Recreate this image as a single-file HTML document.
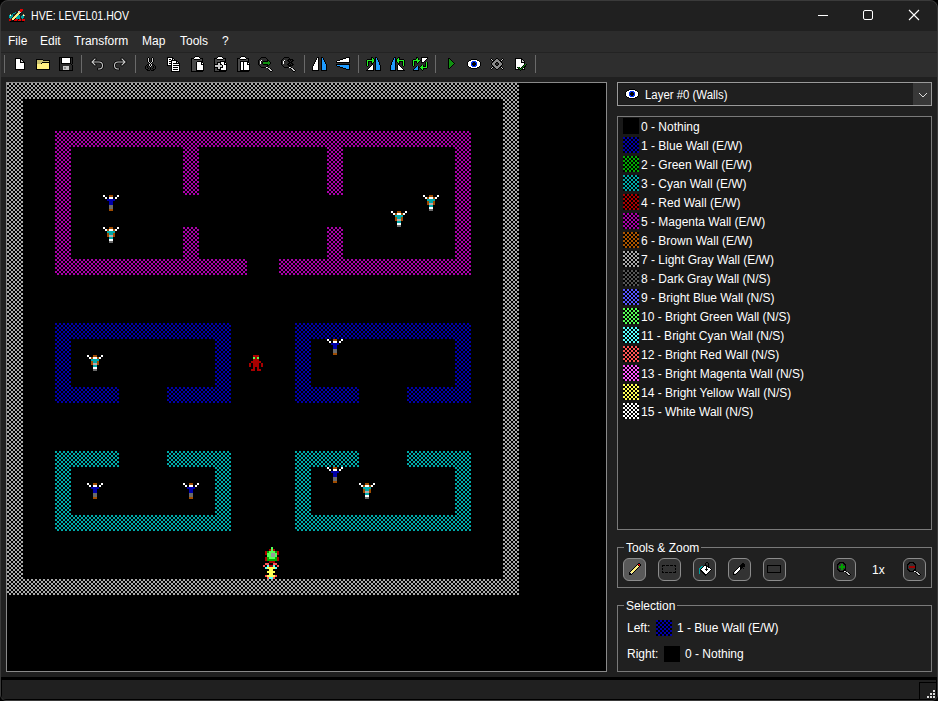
<!DOCTYPE html>
<html><head><meta charset="utf-8">
<style>
html,body{margin:0;padding:0;background:#000;width:938px;height:701px;overflow:hidden}
*{box-sizing:border-box}
#win{position:absolute;left:0;top:0;width:938px;height:701px;background:#202020;border-radius:8px 8px 6px 6px;overflow:hidden;font-family:"Liberation Sans",sans-serif;color:#fff;font-size:12px}
.a{position:absolute}
.t{position:absolute;white-space:nowrap;font-size:12px;color:#fff}
.sw{position:absolute;width:16px;height:16px}
.btn{position:absolute;width:23px;height:23px;border:1px solid #8c8c8c;border-radius:6px;background:#333}
.sep{position:absolute;top:55px;width:1px;height:18px;background:#6a6a6a}
.ic{position:absolute;top:56px}
</style></head><body>
<div id="win">
  <!-- title bar -->
  <div class="a" style="left:0;top:0;width:938px;height:31px;background:#202020"></div>
  <svg class="a" style="left:9px;top:9px" width="16" height="16" shape-rendering="crispEdges"><rect x="11" y="0" width="3" height="1" fill="#e00000"/><rect x="10" y="1" width="4" height="1" fill="#e00000"/><rect x="9" y="2" width="2" height="1" fill="#c8c8c8"/><rect x="11" y="2" width="2" height="1" fill="#e00000"/><rect x="6" y="3" width="1" height="1" fill="#00a0a0"/><rect x="9" y="3" width="1" height="1" fill="#fff080"/><rect x="10" y="3" width="2" height="1" fill="#c8c8c8"/><rect x="4" y="4" width="2" height="1" fill="#00a0a0"/><rect x="8" y="4" width="3" height="1" fill="#fff080"/><rect x="11" y="4" width="1" height="1" fill="#000000"/><rect x="1" y="5" width="1" height="1" fill="#c8c070"/><rect x="3" y="5" width="1" height="1" fill="#00a0a0"/><rect x="7" y="5" width="3" height="1" fill="#fff080"/><rect x="10" y="5" width="1" height="1" fill="#000000"/><rect x="14" y="5" width="1" height="1" fill="#c8c070"/><rect x="0" y="6" width="1" height="1" fill="#00a0a0"/><rect x="1" y="6" width="1" height="1" fill="#ffffff"/><rect x="2" y="6" width="2" height="1" fill="#00a0a0"/><rect x="6" y="6" width="3" height="1" fill="#fff080"/><rect x="9" y="6" width="2" height="1" fill="#00a0a0"/><rect x="13" y="6" width="1" height="1" fill="#00a0a0"/><rect x="14" y="6" width="1" height="1" fill="#ffffff"/><rect x="15" y="6" width="1" height="1" fill="#c8c070"/><rect x="0" y="7" width="4" height="1" fill="#00a0a0"/><rect x="5" y="7" width="3" height="1" fill="#fff080"/><rect x="8" y="7" width="3" height="1" fill="#00a0a0"/><rect x="12" y="7" width="3" height="1" fill="#00a0a0"/><rect x="0" y="8" width="3" height="1" fill="#00a0a0"/><rect x="4" y="8" width="3" height="1" fill="#fff080"/><rect x="7" y="8" width="4" height="1" fill="#00a0a0"/><rect x="12" y="8" width="3" height="1" fill="#00a0a0"/><rect x="1" y="9" width="1" height="1" fill="#00a0a0"/><rect x="3" y="9" width="3" height="1" fill="#fff080"/><rect x="6" y="9" width="1" height="1" fill="#000000"/><rect x="7" y="9" width="4" height="1" fill="#00a0a0"/><rect x="13" y="9" width="1" height="1" fill="#00a0a0"/><rect x="0" y="10" width="2" height="1" fill="#e00000"/><rect x="3" y="10" width="2" height="1" fill="#fff080"/><rect x="5" y="10" width="1" height="1" fill="#000000"/><rect x="6" y="10" width="3" height="1" fill="#e00000"/><rect x="9" y="10" width="1" height="1" fill="#000000"/><rect x="10" y="10" width="2" height="1" fill="#e00000"/><rect x="13" y="10" width="3" height="1" fill="#e00000"/><rect x="0" y="11" width="2" height="1" fill="#e00000"/><rect x="4" y="11" width="1" height="1" fill="#000000"/><rect x="5" y="11" width="3" height="1" fill="#e00000"/><rect x="9" y="11" width="3" height="1" fill="#e00000"/><rect x="13" y="11" width="3" height="1" fill="#e00000"/><rect x="1" y="12" width="14" height="1" fill="#000000"/></svg>
  <div class="t" style="left:31px;top:9px;font-size:12px;color:#fff;transform:scaleX(0.88);transform-origin:0 0">HVE: LEVEL01.HOV</div>
  <!-- window controls -->
  <div class="a" style="left:818px;top:15px;width:10px;height:1px;background:#fff"></div>
  <div class="a" style="left:863px;top:10px;width:10px;height:10px;border:1px solid #fff;border-radius:2px"></div>
  <svg class="a" style="left:908px;top:9px" width="12" height="12"><path d="M1 1 L11 11 M11 1 L1 11" stroke="#fff" stroke-width="1.1"/></svg>

  <!-- menu bar -->
  <div class="a" style="left:0;top:31px;width:938px;height:21px;background:#2c2c2c"></div>
  <div class="t" style="left:8px;top:34px">File</div>
  <div class="t" style="left:40px;top:34px">Edit</div>
  <div class="t" style="left:74px;top:34px">Transform</div>
  <div class="t" style="left:142px;top:34px">Map</div>
  <div class="t" style="left:180px;top:34px">Tools</div>
  <div class="t" style="left:222px;top:34px">?</div>

  <!-- toolbar -->
  <div class="a" style="left:0;top:52px;width:938px;height:1px;background:#232323"></div>
  <div class="a" style="left:0;top:53px;width:938px;height:24px;background:#2e2e2e"></div>
  <div class="sep" style="left:4px"></div><div class="sep" style="left:81px"></div><div class="sep" style="left:135px"></div><div class="sep" style="left:304px"></div><div class="sep" style="left:358px"></div><div class="sep" style="left:435px"></div><div class="sep" style="left:535px"></div><svg class="a" style="left:13px;top:56px" width="16" height="16" shape-rendering="crispEdges"><rect x="2" y="2" width="6" height="1" fill="#000000"/><rect x="2" y="3" width="1" height="1" fill="#000000"/><rect x="3" y="3" width="4" height="1" fill="#ffffff"/><rect x="7" y="3" width="2" height="1" fill="#000000"/><rect x="2" y="4" width="1" height="1" fill="#000000"/><rect x="3" y="4" width="4" height="1" fill="#ffffff"/><rect x="7" y="4" width="1" height="1" fill="#000000"/><rect x="8" y="4" width="1" height="1" fill="#c8c8c8"/><rect x="9" y="4" width="1" height="1" fill="#000000"/><rect x="2" y="5" width="1" height="1" fill="#000000"/><rect x="3" y="5" width="4" height="1" fill="#ffffff"/><rect x="7" y="5" width="1" height="1" fill="#000000"/><rect x="8" y="5" width="2" height="1" fill="#c8c8c8"/><rect x="10" y="5" width="1" height="1" fill="#000000"/><rect x="2" y="6" width="1" height="1" fill="#000000"/><rect x="3" y="6" width="4" height="1" fill="#ffffff"/><rect x="7" y="6" width="5" height="1" fill="#000000"/><rect x="2" y="7" width="1" height="1" fill="#000000"/><rect x="3" y="7" width="8" height="1" fill="#ffffff"/><rect x="11" y="7" width="1" height="1" fill="#000000"/><rect x="2" y="8" width="1" height="1" fill="#000000"/><rect x="3" y="8" width="8" height="1" fill="#ffffff"/><rect x="11" y="8" width="1" height="1" fill="#000000"/><rect x="2" y="9" width="1" height="1" fill="#000000"/><rect x="3" y="9" width="8" height="1" fill="#ffffff"/><rect x="11" y="9" width="1" height="1" fill="#000000"/><rect x="2" y="10" width="1" height="1" fill="#000000"/><rect x="3" y="10" width="8" height="1" fill="#ffffff"/><rect x="11" y="10" width="1" height="1" fill="#000000"/><rect x="2" y="11" width="1" height="1" fill="#000000"/><rect x="3" y="11" width="8" height="1" fill="#ffffff"/><rect x="11" y="11" width="1" height="1" fill="#000000"/><rect x="2" y="12" width="1" height="1" fill="#000000"/><rect x="3" y="12" width="8" height="1" fill="#ffffff"/><rect x="11" y="12" width="1" height="1" fill="#000000"/><rect x="2" y="13" width="10" height="1" fill="#000000"/></svg><svg class="a" style="left:35px;top:56px" width="16" height="16" shape-rendering="crispEdges"><rect x="1" y="3" width="7" height="1" fill="#000000"/><rect x="1" y="4" width="1" height="1" fill="#000000"/><rect x="2" y="4" width="6" height="1" fill="#c8c070"/><rect x="8" y="4" width="7" height="1" fill="#000000"/><rect x="1" y="5" width="1" height="1" fill="#000000"/><rect x="2" y="5" width="12" height="1" fill="#c8c070"/><rect x="14" y="5" width="1" height="1" fill="#000000"/><rect x="1" y="6" width="1" height="1" fill="#000000"/><rect x="2" y="6" width="5" height="1" fill="#c8c070"/><rect x="7" y="6" width="8" height="1" fill="#000000"/><rect x="1" y="7" width="1" height="1" fill="#000000"/><rect x="2" y="7" width="4" height="1" fill="#c8c070"/><rect x="6" y="7" width="1" height="1" fill="#000000"/><rect x="7" y="7" width="7" height="1" fill="#fff080"/><rect x="14" y="7" width="1" height="1" fill="#000000"/><rect x="1" y="8" width="1" height="1" fill="#000000"/><rect x="2" y="8" width="12" height="1" fill="#fff080"/><rect x="14" y="8" width="1" height="1" fill="#000000"/><rect x="1" y="9" width="1" height="1" fill="#000000"/><rect x="2" y="9" width="12" height="1" fill="#fff080"/><rect x="14" y="9" width="1" height="1" fill="#000000"/><rect x="1" y="10" width="1" height="1" fill="#000000"/><rect x="2" y="10" width="12" height="1" fill="#fff080"/><rect x="14" y="10" width="1" height="1" fill="#000000"/><rect x="1" y="11" width="1" height="1" fill="#000000"/><rect x="2" y="11" width="12" height="1" fill="#fff080"/><rect x="14" y="11" width="1" height="1" fill="#000000"/><rect x="1" y="12" width="1" height="1" fill="#000000"/><rect x="2" y="12" width="12" height="1" fill="#fff080"/><rect x="14" y="12" width="1" height="1" fill="#000000"/><rect x="1" y="13" width="14" height="1" fill="#000000"/></svg><svg class="a" style="left:58px;top:56px" width="16" height="16" shape-rendering="crispEdges"><rect x="1" y="1" width="14" height="1" fill="#000000"/><rect x="1" y="2" width="1" height="1" fill="#000000"/><rect x="2" y="2" width="1" height="1" fill="#2a2a2a"/><rect x="3" y="2" width="1" height="1" fill="#000000"/><rect x="4" y="2" width="8" height="1" fill="#ffffff"/><rect x="12" y="2" width="1" height="1" fill="#000000"/><rect x="13" y="2" width="1" height="1" fill="#2a2a2a"/><rect x="14" y="2" width="1" height="1" fill="#000000"/><rect x="1" y="3" width="1" height="1" fill="#000000"/><rect x="2" y="3" width="1" height="1" fill="#2a2a2a"/><rect x="3" y="3" width="1" height="1" fill="#000000"/><rect x="4" y="3" width="8" height="1" fill="#ffffff"/><rect x="12" y="3" width="1" height="1" fill="#000000"/><rect x="13" y="3" width="1" height="1" fill="#2a2a2a"/><rect x="14" y="3" width="1" height="1" fill="#000000"/><rect x="1" y="4" width="1" height="1" fill="#000000"/><rect x="2" y="4" width="1" height="1" fill="#2a2a2a"/><rect x="3" y="4" width="1" height="1" fill="#000000"/><rect x="4" y="4" width="8" height="1" fill="#ffffff"/><rect x="12" y="4" width="1" height="1" fill="#000000"/><rect x="13" y="4" width="1" height="1" fill="#2a2a2a"/><rect x="14" y="4" width="1" height="1" fill="#000000"/><rect x="1" y="5" width="1" height="1" fill="#000000"/><rect x="2" y="5" width="1" height="1" fill="#2a2a2a"/><rect x="3" y="5" width="1" height="1" fill="#000000"/><rect x="4" y="5" width="8" height="1" fill="#ffffff"/><rect x="12" y="5" width="1" height="1" fill="#000000"/><rect x="13" y="5" width="1" height="1" fill="#2a2a2a"/><rect x="14" y="5" width="1" height="1" fill="#000000"/><rect x="1" y="6" width="1" height="1" fill="#000000"/><rect x="2" y="6" width="1" height="1" fill="#2a2a2a"/><rect x="3" y="6" width="1" height="1" fill="#000000"/><rect x="4" y="6" width="8" height="1" fill="#ffffff"/><rect x="12" y="6" width="1" height="1" fill="#000000"/><rect x="13" y="6" width="1" height="1" fill="#2a2a2a"/><rect x="14" y="6" width="1" height="1" fill="#000000"/><rect x="1" y="7" width="1" height="1" fill="#000000"/><rect x="2" y="7" width="1" height="1" fill="#2a2a2a"/><rect x="3" y="7" width="10" height="1" fill="#000000"/><rect x="13" y="7" width="1" height="1" fill="#2a2a2a"/><rect x="14" y="7" width="1" height="1" fill="#000000"/><rect x="1" y="8" width="1" height="1" fill="#000000"/><rect x="2" y="8" width="11" height="1" fill="#2a2a2a"/><rect x="13" y="8" width="1" height="1" fill="#000000"/><rect x="1" y="9" width="1" height="1" fill="#000000"/><rect x="2" y="9" width="12" height="1" fill="#2a2a2a"/><rect x="14" y="9" width="1" height="1" fill="#000000"/><rect x="1" y="10" width="1" height="1" fill="#000000"/><rect x="2" y="10" width="3" height="1" fill="#2a2a2a"/><rect x="5" y="10" width="6" height="1" fill="#c8c8c8"/><rect x="11" y="10" width="3" height="1" fill="#2a2a2a"/><rect x="14" y="10" width="1" height="1" fill="#000000"/><rect x="1" y="11" width="1" height="1" fill="#000000"/><rect x="2" y="11" width="3" height="1" fill="#2a2a2a"/><rect x="5" y="11" width="1" height="1" fill="#c8c8c8"/><rect x="6" y="11" width="2" height="1" fill="#8a8a8a"/><rect x="8" y="11" width="3" height="1" fill="#c8c8c8"/><rect x="11" y="11" width="3" height="1" fill="#2a2a2a"/><rect x="14" y="11" width="1" height="1" fill="#000000"/><rect x="1" y="12" width="1" height="1" fill="#000000"/><rect x="2" y="12" width="3" height="1" fill="#2a2a2a"/><rect x="5" y="12" width="1" height="1" fill="#c8c8c8"/><rect x="6" y="12" width="2" height="1" fill="#8a8a8a"/><rect x="8" y="12" width="3" height="1" fill="#c8c8c8"/><rect x="11" y="12" width="3" height="1" fill="#2a2a2a"/><rect x="14" y="12" width="1" height="1" fill="#000000"/><rect x="1" y="13" width="1" height="1" fill="#000000"/><rect x="2" y="13" width="3" height="1" fill="#2a2a2a"/><rect x="5" y="13" width="6" height="1" fill="#c8c8c8"/><rect x="11" y="13" width="3" height="1" fill="#2a2a2a"/><rect x="14" y="13" width="1" height="1" fill="#000000"/><rect x="1" y="14" width="14" height="1" fill="#000000"/></svg><svg class="a" style="left:89px;top:56px" width="16" height="16" shape-rendering="crispEdges"><g shape-rendering="geometricPrecision" fill="none" stroke-linecap="square" stroke-linejoin="miter"><path d="M3 6 H10 Q13.5 6 13.5 9.5 Q13.5 13 10 13 H9.5 M6 3 L3 6 L6 9" stroke="#000" stroke-width="2.6"/><path d="M3 6 H10 Q13.5 6 13.5 9.5 Q13.5 13 10 13 H9.5 M6 3 L3 6 L6 9" stroke="#c8c8c8" stroke-width="1.1"/></g></svg><svg class="a" style="left:112px;top:56px" width="16" height="16" shape-rendering="crispEdges"><g shape-rendering="geometricPrecision" fill="none" stroke-linecap="square" stroke-linejoin="miter"><path d="M13 6 H6 Q2.5 6 2.5 9.5 Q2.5 13 6 13 H6.5 M10 3 L13 6 L10 9" stroke="#000" stroke-width="2.6"/><path d="M13 6 H6 Q2.5 6 2.5 9.5 Q2.5 13 6 13 H6.5 M10 3 L13 6 L10 9" stroke="#c8c8c8" stroke-width="1.1"/></g></svg><svg class="a" style="left:143px;top:56px" width="16" height="16" shape-rendering="crispEdges"><rect x="5" y="1" width="1" height="1" fill="#000000"/><rect x="9" y="1" width="1" height="1" fill="#000000"/><rect x="4" y="2" width="1" height="1" fill="#000000"/><rect x="5" y="2" width="1" height="1" fill="#c8c8c8"/><rect x="6" y="2" width="1" height="1" fill="#000000"/><rect x="8" y="2" width="1" height="1" fill="#000000"/><rect x="9" y="2" width="1" height="1" fill="#c8c8c8"/><rect x="10" y="2" width="1" height="1" fill="#000000"/><rect x="4" y="3" width="1" height="1" fill="#000000"/><rect x="5" y="3" width="1" height="1" fill="#c8c8c8"/><rect x="6" y="3" width="1" height="1" fill="#000000"/><rect x="8" y="3" width="1" height="1" fill="#000000"/><rect x="9" y="3" width="1" height="1" fill="#c8c8c8"/><rect x="10" y="3" width="1" height="1" fill="#000000"/><rect x="4" y="4" width="1" height="1" fill="#000000"/><rect x="5" y="4" width="1" height="1" fill="#c8c8c8"/><rect x="6" y="4" width="1" height="1" fill="#000000"/><rect x="8" y="4" width="1" height="1" fill="#000000"/><rect x="9" y="4" width="1" height="1" fill="#c8c8c8"/><rect x="10" y="4" width="1" height="1" fill="#000000"/><rect x="4" y="5" width="1" height="1" fill="#000000"/><rect x="5" y="5" width="1" height="1" fill="#c8c8c8"/><rect x="6" y="5" width="1" height="1" fill="#000000"/><rect x="8" y="5" width="1" height="1" fill="#000000"/><rect x="9" y="5" width="1" height="1" fill="#c8c8c8"/><rect x="10" y="5" width="1" height="1" fill="#000000"/><rect x="5" y="6" width="1" height="1" fill="#000000"/><rect x="6" y="6" width="1" height="1" fill="#c8c8c8"/><rect x="7" y="6" width="1" height="1" fill="#000000"/><rect x="8" y="6" width="1" height="1" fill="#c8c8c8"/><rect x="9" y="6" width="1" height="1" fill="#000000"/><rect x="6" y="7" width="1" height="1" fill="#000000"/><rect x="7" y="7" width="1" height="1" fill="#c8c8c8"/><rect x="8" y="7" width="1" height="1" fill="#000000"/><rect x="4" y="8" width="2" height="1" fill="#000000"/><rect x="6" y="8" width="1" height="1" fill="#c8c8c8"/><rect x="7" y="8" width="1" height="1" fill="#000000"/><rect x="8" y="8" width="1" height="1" fill="#c8c8c8"/><rect x="9" y="8" width="2" height="1" fill="#000000"/><rect x="3" y="9" width="1" height="1" fill="#000000"/><rect x="5" y="9" width="1" height="1" fill="#000000"/><rect x="6" y="9" width="1" height="1" fill="#c8c8c8"/><rect x="7" y="9" width="1" height="1" fill="#000000"/><rect x="8" y="9" width="1" height="1" fill="#c8c8c8"/><rect x="9" y="9" width="1" height="1" fill="#000000"/><rect x="11" y="9" width="1" height="1" fill="#000000"/><rect x="2" y="10" width="1" height="1" fill="#000000"/><rect x="4" y="10" width="1" height="1" fill="#000000"/><rect x="6" y="10" width="1" height="1" fill="#000000"/><rect x="7" y="10" width="1" height="1" fill="#c8c8c8"/><rect x="8" y="10" width="1" height="1" fill="#000000"/><rect x="10" y="10" width="1" height="1" fill="#000000"/><rect x="12" y="10" width="1" height="1" fill="#000000"/><rect x="2" y="11" width="1" height="1" fill="#000000"/><rect x="4" y="11" width="1" height="1" fill="#000000"/><rect x="7" y="11" width="1" height="1" fill="#000000"/><rect x="10" y="11" width="1" height="1" fill="#000000"/><rect x="12" y="11" width="1" height="1" fill="#000000"/><rect x="2" y="12" width="1" height="1" fill="#000000"/><rect x="5" y="12" width="1" height="1" fill="#000000"/><rect x="7" y="12" width="1" height="1" fill="#000000"/><rect x="9" y="12" width="1" height="1" fill="#000000"/><rect x="12" y="12" width="1" height="1" fill="#000000"/><rect x="3" y="13" width="2" height="1" fill="#000000"/><rect x="7" y="13" width="1" height="1" fill="#000000"/><rect x="10" y="13" width="2" height="1" fill="#000000"/><rect x="4" y="14" width="3" height="1" fill="#000000"/><rect x="8" y="14" width="3" height="1" fill="#000000"/></svg><svg class="a" style="left:166px;top:56px" width="16" height="16" shape-rendering="crispEdges"><rect x="1" y="1" width="6" height="1" fill="#000000"/><rect x="1" y="2" width="1" height="1" fill="#000000"/><rect x="2" y="2" width="4" height="1" fill="#ffffff"/><rect x="6" y="2" width="2" height="1" fill="#000000"/><rect x="1" y="3" width="1" height="1" fill="#000000"/><rect x="2" y="3" width="1" height="1" fill="#ffffff"/><rect x="3" y="3" width="2" height="1" fill="#000000"/><rect x="5" y="3" width="1" height="1" fill="#ffffff"/><rect x="6" y="3" width="1" height="1" fill="#000000"/><rect x="7" y="3" width="1" height="1" fill="#c8c8c8"/><rect x="8" y="3" width="1" height="1" fill="#000000"/><rect x="1" y="4" width="1" height="1" fill="#000000"/><rect x="2" y="4" width="3" height="1" fill="#ffffff"/><rect x="5" y="4" width="6" height="1" fill="#000000"/><rect x="1" y="5" width="1" height="1" fill="#000000"/><rect x="2" y="5" width="1" height="1" fill="#ffffff"/><rect x="3" y="5" width="3" height="1" fill="#000000"/><rect x="6" y="5" width="4" height="1" fill="#ffffff"/><rect x="10" y="5" width="2" height="1" fill="#000000"/><rect x="1" y="6" width="1" height="1" fill="#000000"/><rect x="2" y="6" width="3" height="1" fill="#ffffff"/><rect x="5" y="6" width="1" height="1" fill="#000000"/><rect x="6" y="6" width="4" height="1" fill="#ffffff"/><rect x="10" y="6" width="1" height="1" fill="#000000"/><rect x="11" y="6" width="1" height="1" fill="#c8c8c8"/><rect x="12" y="6" width="1" height="1" fill="#000000"/><rect x="1" y="7" width="1" height="1" fill="#000000"/><rect x="2" y="7" width="1" height="1" fill="#ffffff"/><rect x="3" y="7" width="3" height="1" fill="#000000"/><rect x="6" y="7" width="1" height="1" fill="#ffffff"/><rect x="7" y="7" width="7" height="1" fill="#000000"/><rect x="1" y="8" width="1" height="1" fill="#000000"/><rect x="2" y="8" width="3" height="1" fill="#ffffff"/><rect x="5" y="8" width="1" height="1" fill="#000000"/><rect x="6" y="8" width="7" height="1" fill="#ffffff"/><rect x="13" y="8" width="1" height="1" fill="#000000"/><rect x="1" y="9" width="5" height="1" fill="#000000"/><rect x="6" y="9" width="1" height="1" fill="#ffffff"/><rect x="7" y="9" width="7" height="1" fill="#000000"/><rect x="5" y="10" width="1" height="1" fill="#000000"/><rect x="6" y="10" width="7" height="1" fill="#ffffff"/><rect x="13" y="10" width="1" height="1" fill="#000000"/><rect x="5" y="11" width="1" height="1" fill="#000000"/><rect x="6" y="11" width="1" height="1" fill="#ffffff"/><rect x="7" y="11" width="5" height="1" fill="#000000"/><rect x="12" y="11" width="1" height="1" fill="#ffffff"/><rect x="13" y="11" width="1" height="1" fill="#000000"/><rect x="5" y="12" width="1" height="1" fill="#000000"/><rect x="6" y="12" width="7" height="1" fill="#ffffff"/><rect x="13" y="12" width="1" height="1" fill="#000000"/><rect x="5" y="13" width="1" height="1" fill="#000000"/><rect x="6" y="13" width="1" height="1" fill="#ffffff"/><rect x="7" y="13" width="5" height="1" fill="#000000"/><rect x="12" y="13" width="1" height="1" fill="#ffffff"/><rect x="13" y="13" width="1" height="1" fill="#000000"/><rect x="5" y="14" width="1" height="1" fill="#000000"/><rect x="6" y="14" width="7" height="1" fill="#ffffff"/><rect x="13" y="14" width="1" height="1" fill="#000000"/><rect x="5" y="15" width="9" height="1" fill="#000000"/></svg><svg class="a" style="left:189px;top:56px" width="16" height="16" shape-rendering="crispEdges"><rect x="6" y="0" width="4" height="1" fill="#000000"/><rect x="5" y="1" width="1" height="1" fill="#000000"/><rect x="6" y="1" width="4" height="1" fill="#ffffff"/><rect x="10" y="1" width="1" height="1" fill="#000000"/><rect x="2" y="2" width="3" height="1" fill="#000000"/><rect x="5" y="2" width="6" height="1" fill="#ffffff"/><rect x="11" y="2" width="3" height="1" fill="#000000"/><rect x="2" y="3" width="1" height="1" fill="#000000"/><rect x="3" y="3" width="2" height="1" fill="#4a4a4a"/><rect x="5" y="3" width="6" height="1" fill="#000000"/><rect x="11" y="3" width="2" height="1" fill="#4a4a4a"/><rect x="13" y="3" width="1" height="1" fill="#000000"/><rect x="2" y="4" width="1" height="1" fill="#000000"/><rect x="3" y="4" width="10" height="1" fill="#4a4a4a"/><rect x="13" y="4" width="1" height="1" fill="#000000"/><rect x="2" y="5" width="1" height="1" fill="#000000"/><rect x="3" y="5" width="5" height="1" fill="#4a4a4a"/><rect x="8" y="5" width="6" height="1" fill="#000000"/><rect x="2" y="6" width="1" height="1" fill="#000000"/><rect x="3" y="6" width="4" height="1" fill="#4a4a4a"/><rect x="7" y="6" width="1" height="1" fill="#000000"/><rect x="8" y="6" width="4" height="1" fill="#ffffff"/><rect x="12" y="6" width="2" height="1" fill="#000000"/><rect x="2" y="7" width="1" height="1" fill="#000000"/><rect x="3" y="7" width="4" height="1" fill="#4a4a4a"/><rect x="7" y="7" width="1" height="1" fill="#000000"/><rect x="8" y="7" width="4" height="1" fill="#ffffff"/><rect x="12" y="7" width="1" height="1" fill="#000000"/><rect x="13" y="7" width="1" height="1" fill="#ffffff"/><rect x="14" y="7" width="1" height="1" fill="#000000"/><rect x="2" y="8" width="1" height="1" fill="#000000"/><rect x="3" y="8" width="4" height="1" fill="#4a4a4a"/><rect x="7" y="8" width="1" height="1" fill="#000000"/><rect x="8" y="8" width="4" height="1" fill="#ffffff"/><rect x="12" y="8" width="3" height="1" fill="#000000"/><rect x="2" y="9" width="1" height="1" fill="#000000"/><rect x="3" y="9" width="4" height="1" fill="#4a4a4a"/><rect x="7" y="9" width="1" height="1" fill="#000000"/><rect x="8" y="9" width="6" height="1" fill="#ffffff"/><rect x="14" y="9" width="1" height="1" fill="#000000"/><rect x="2" y="10" width="1" height="1" fill="#000000"/><rect x="3" y="10" width="4" height="1" fill="#4a4a4a"/><rect x="7" y="10" width="1" height="1" fill="#000000"/><rect x="8" y="10" width="6" height="1" fill="#ffffff"/><rect x="14" y="10" width="1" height="1" fill="#000000"/><rect x="2" y="11" width="1" height="1" fill="#000000"/><rect x="3" y="11" width="4" height="1" fill="#4a4a4a"/><rect x="7" y="11" width="1" height="1" fill="#000000"/><rect x="8" y="11" width="6" height="1" fill="#ffffff"/><rect x="14" y="11" width="1" height="1" fill="#000000"/><rect x="2" y="12" width="1" height="1" fill="#000000"/><rect x="3" y="12" width="4" height="1" fill="#4a4a4a"/><rect x="7" y="12" width="1" height="1" fill="#000000"/><rect x="8" y="12" width="6" height="1" fill="#ffffff"/><rect x="14" y="12" width="1" height="1" fill="#000000"/><rect x="2" y="13" width="1" height="1" fill="#000000"/><rect x="3" y="13" width="4" height="1" fill="#4a4a4a"/><rect x="7" y="13" width="1" height="1" fill="#000000"/><rect x="8" y="13" width="6" height="1" fill="#ffffff"/><rect x="14" y="13" width="1" height="1" fill="#000000"/><rect x="2" y="14" width="1" height="1" fill="#000000"/><rect x="3" y="14" width="4" height="1" fill="#4a4a4a"/><rect x="7" y="14" width="8" height="1" fill="#000000"/><rect x="2" y="15" width="12" height="1" fill="#000000"/></svg><svg class="a" style="left:212px;top:56px" width="16" height="16" shape-rendering="crispEdges"><rect x="6" y="0" width="4" height="1" fill="#000000"/><rect x="5" y="1" width="1" height="1" fill="#000000"/><rect x="6" y="1" width="4" height="1" fill="#ffffff"/><rect x="10" y="1" width="1" height="1" fill="#000000"/><rect x="2" y="2" width="3" height="1" fill="#000000"/><rect x="5" y="2" width="6" height="1" fill="#ffffff"/><rect x="11" y="2" width="3" height="1" fill="#000000"/><rect x="2" y="3" width="1" height="1" fill="#000000"/><rect x="3" y="3" width="2" height="1" fill="#4a4a4a"/><rect x="5" y="3" width="6" height="1" fill="#000000"/><rect x="11" y="3" width="2" height="1" fill="#4a4a4a"/><rect x="13" y="3" width="1" height="1" fill="#000000"/><rect x="2" y="4" width="1" height="1" fill="#000000"/><rect x="3" y="4" width="10" height="1" fill="#4a4a4a"/><rect x="13" y="4" width="1" height="1" fill="#000000"/><rect x="2" y="5" width="1" height="1" fill="#000000"/><rect x="3" y="5" width="5" height="1" fill="#4a4a4a"/><rect x="8" y="5" width="6" height="1" fill="#000000"/><rect x="2" y="6" width="1" height="1" fill="#000000"/><rect x="3" y="6" width="2" height="1" fill="#4a4a4a"/><rect x="5" y="6" width="4" height="1" fill="#000000"/><rect x="9" y="6" width="3" height="1" fill="#ffffff"/><rect x="12" y="6" width="2" height="1" fill="#000000"/><rect x="2" y="7" width="1" height="1" fill="#000000"/><rect x="3" y="7" width="2" height="1" fill="#4a4a4a"/><rect x="5" y="7" width="1" height="1" fill="#000000"/><rect x="6" y="7" width="2" height="1" fill="#c8c8c8"/><rect x="8" y="7" width="1" height="1" fill="#000000"/><rect x="9" y="7" width="3" height="1" fill="#ffffff"/><rect x="12" y="7" width="1" height="1" fill="#000000"/><rect x="13" y="7" width="1" height="1" fill="#ffffff"/><rect x="14" y="7" width="1" height="1" fill="#000000"/><rect x="2" y="8" width="4" height="1" fill="#000000"/><rect x="6" y="8" width="2" height="1" fill="#c8c8c8"/><rect x="8" y="8" width="2" height="1" fill="#000000"/><rect x="10" y="8" width="2" height="1" fill="#ffffff"/><rect x="12" y="8" width="3" height="1" fill="#000000"/><rect x="2" y="9" width="1" height="1" fill="#000000"/><rect x="3" y="9" width="7" height="1" fill="#c8c8c8"/><rect x="10" y="9" width="1" height="1" fill="#000000"/><rect x="11" y="9" width="3" height="1" fill="#ffffff"/><rect x="14" y="9" width="1" height="1" fill="#000000"/><rect x="2" y="10" width="1" height="1" fill="#000000"/><rect x="3" y="10" width="7" height="1" fill="#c8c8c8"/><rect x="10" y="10" width="1" height="1" fill="#000000"/><rect x="11" y="10" width="3" height="1" fill="#ffffff"/><rect x="14" y="10" width="1" height="1" fill="#000000"/><rect x="2" y="11" width="4" height="1" fill="#000000"/><rect x="6" y="11" width="2" height="1" fill="#c8c8c8"/><rect x="8" y="11" width="3" height="1" fill="#000000"/><rect x="11" y="11" width="3" height="1" fill="#ffffff"/><rect x="14" y="11" width="1" height="1" fill="#000000"/><rect x="2" y="12" width="1" height="1" fill="#000000"/><rect x="3" y="12" width="2" height="1" fill="#4a4a4a"/><rect x="5" y="12" width="1" height="1" fill="#000000"/><rect x="6" y="12" width="2" height="1" fill="#c8c8c8"/><rect x="8" y="12" width="1" height="1" fill="#000000"/><rect x="9" y="12" width="5" height="1" fill="#ffffff"/><rect x="14" y="12" width="1" height="1" fill="#000000"/><rect x="2" y="13" width="1" height="1" fill="#000000"/><rect x="3" y="13" width="2" height="1" fill="#4a4a4a"/><rect x="5" y="13" width="4" height="1" fill="#000000"/><rect x="9" y="13" width="5" height="1" fill="#ffffff"/><rect x="14" y="13" width="1" height="1" fill="#000000"/><rect x="2" y="14" width="1" height="1" fill="#000000"/><rect x="3" y="14" width="4" height="1" fill="#4a4a4a"/><rect x="7" y="14" width="8" height="1" fill="#000000"/><rect x="2" y="15" width="12" height="1" fill="#000000"/></svg><svg class="a" style="left:235px;top:56px" width="16" height="16" shape-rendering="crispEdges"><rect x="6" y="0" width="4" height="1" fill="#000000"/><rect x="5" y="1" width="1" height="1" fill="#000000"/><rect x="6" y="1" width="4" height="1" fill="#ffffff"/><rect x="10" y="1" width="1" height="1" fill="#000000"/><rect x="2" y="2" width="3" height="1" fill="#000000"/><rect x="5" y="2" width="6" height="1" fill="#ffffff"/><rect x="11" y="2" width="3" height="1" fill="#000000"/><rect x="2" y="3" width="1" height="1" fill="#000000"/><rect x="3" y="3" width="2" height="1" fill="#4a4a4a"/><rect x="5" y="3" width="6" height="1" fill="#000000"/><rect x="11" y="3" width="2" height="1" fill="#4a4a4a"/><rect x="13" y="3" width="1" height="1" fill="#000000"/><rect x="2" y="4" width="1" height="1" fill="#000000"/><rect x="3" y="4" width="10" height="1" fill="#4a4a4a"/><rect x="13" y="4" width="1" height="1" fill="#000000"/><rect x="2" y="5" width="1" height="1" fill="#000000"/><rect x="3" y="5" width="2" height="1" fill="#4a4a4a"/><rect x="5" y="5" width="9" height="1" fill="#000000"/><rect x="2" y="6" width="1" height="1" fill="#000000"/><rect x="3" y="6" width="2" height="1" fill="#4a4a4a"/><rect x="5" y="6" width="1" height="1" fill="#000000"/><rect x="6" y="6" width="2" height="1" fill="#ffffff"/><rect x="8" y="6" width="1" height="1" fill="#000000"/><rect x="9" y="6" width="3" height="1" fill="#ffffff"/><rect x="12" y="6" width="2" height="1" fill="#000000"/><rect x="2" y="7" width="1" height="1" fill="#000000"/><rect x="3" y="7" width="2" height="1" fill="#4a4a4a"/><rect x="5" y="7" width="1" height="1" fill="#000000"/><rect x="6" y="7" width="2" height="1" fill="#ffffff"/><rect x="8" y="7" width="1" height="1" fill="#000000"/><rect x="9" y="7" width="3" height="1" fill="#ffffff"/><rect x="12" y="7" width="1" height="1" fill="#000000"/><rect x="13" y="7" width="1" height="1" fill="#ffffff"/><rect x="14" y="7" width="1" height="1" fill="#000000"/><rect x="2" y="8" width="1" height="1" fill="#000000"/><rect x="3" y="8" width="2" height="1" fill="#4a4a4a"/><rect x="5" y="8" width="1" height="1" fill="#000000"/><rect x="6" y="8" width="2" height="1" fill="#ffffff"/><rect x="8" y="8" width="1" height="1" fill="#000000"/><rect x="9" y="8" width="3" height="1" fill="#ffffff"/><rect x="12" y="8" width="3" height="1" fill="#000000"/><rect x="2" y="9" width="1" height="1" fill="#000000"/><rect x="3" y="9" width="2" height="1" fill="#4a4a4a"/><rect x="5" y="9" width="1" height="1" fill="#000000"/><rect x="6" y="9" width="2" height="1" fill="#ffffff"/><rect x="8" y="9" width="1" height="1" fill="#000000"/><rect x="9" y="9" width="5" height="1" fill="#ffffff"/><rect x="14" y="9" width="1" height="1" fill="#000000"/><rect x="2" y="10" width="1" height="1" fill="#000000"/><rect x="3" y="10" width="2" height="1" fill="#4a4a4a"/><rect x="5" y="10" width="1" height="1" fill="#000000"/><rect x="6" y="10" width="2" height="1" fill="#ffffff"/><rect x="8" y="10" width="1" height="1" fill="#000000"/><rect x="9" y="10" width="5" height="1" fill="#ffffff"/><rect x="14" y="10" width="1" height="1" fill="#000000"/><rect x="2" y="11" width="1" height="1" fill="#000000"/><rect x="3" y="11" width="2" height="1" fill="#4a4a4a"/><rect x="5" y="11" width="1" height="1" fill="#000000"/><rect x="6" y="11" width="2" height="1" fill="#ffffff"/><rect x="8" y="11" width="1" height="1" fill="#000000"/><rect x="9" y="11" width="5" height="1" fill="#ffffff"/><rect x="14" y="11" width="1" height="1" fill="#000000"/><rect x="2" y="12" width="1" height="1" fill="#000000"/><rect x="3" y="12" width="2" height="1" fill="#4a4a4a"/><rect x="5" y="12" width="1" height="1" fill="#000000"/><rect x="6" y="12" width="2" height="1" fill="#ffffff"/><rect x="8" y="12" width="1" height="1" fill="#000000"/><rect x="9" y="12" width="5" height="1" fill="#ffffff"/><rect x="14" y="12" width="1" height="1" fill="#000000"/><rect x="2" y="13" width="1" height="1" fill="#000000"/><rect x="3" y="13" width="2" height="1" fill="#4a4a4a"/><rect x="5" y="13" width="1" height="1" fill="#000000"/><rect x="6" y="13" width="2" height="1" fill="#ffffff"/><rect x="8" y="13" width="1" height="1" fill="#000000"/><rect x="9" y="13" width="5" height="1" fill="#ffffff"/><rect x="14" y="13" width="1" height="1" fill="#000000"/><rect x="2" y="14" width="1" height="1" fill="#000000"/><rect x="3" y="14" width="2" height="1" fill="#4a4a4a"/><rect x="5" y="14" width="10" height="1" fill="#000000"/><rect x="2" y="15" width="12" height="1" fill="#000000"/></svg><svg class="a" style="left:257px;top:57px" width="16" height="16" shape-rendering="crispEdges"><rect x="4" y="0" width="5" height="1" fill="#000000"/><rect x="3" y="1" width="1" height="1" fill="#000000"/><rect x="9" y="1" width="1" height="1" fill="#000000"/><rect x="2" y="2" width="1" height="1" fill="#000000"/><rect x="10" y="2" width="1" height="1" fill="#000000"/><rect x="1" y="3" width="1" height="1" fill="#000000"/><rect x="4" y="3" width="1" height="1" fill="#ffffff"/><rect x="10" y="3" width="2" height="1" fill="#000000"/><rect x="1" y="4" width="1" height="1" fill="#000000"/><rect x="3" y="4" width="1" height="1" fill="#ffffff"/><rect x="4" y="4" width="1" height="1" fill="#000000"/><rect x="6" y="4" width="5" height="1" fill="#000000"/><rect x="11" y="4" width="1" height="1" fill="#109010"/><rect x="12" y="4" width="1" height="1" fill="#000000"/><rect x="1" y="5" width="1" height="1" fill="#000000"/><rect x="3" y="5" width="1" height="1" fill="#ffffff"/><rect x="5" y="5" width="1" height="1" fill="#000000"/><rect x="6" y="5" width="7" height="1" fill="#109010"/><rect x="13" y="5" width="1" height="1" fill="#000000"/><rect x="1" y="6" width="1" height="1" fill="#000000"/><rect x="3" y="6" width="1" height="1" fill="#ffffff"/><rect x="5" y="6" width="1" height="1" fill="#000000"/><rect x="6" y="6" width="7" height="1" fill="#109010"/><rect x="13" y="6" width="1" height="1" fill="#000000"/><rect x="1" y="7" width="1" height="1" fill="#000000"/><rect x="6" y="7" width="5" height="1" fill="#000000"/><rect x="11" y="7" width="1" height="1" fill="#109010"/><rect x="12" y="7" width="1" height="1" fill="#000000"/><rect x="2" y="8" width="1" height="1" fill="#000000"/><rect x="10" y="8" width="2" height="1" fill="#000000"/><rect x="3" y="9" width="1" height="1" fill="#000000"/><rect x="9" y="9" width="2" height="1" fill="#000000"/><rect x="4" y="10" width="5" height="1" fill="#000000"/><rect x="9" y="10" width="1" height="1" fill="#ffffff"/><rect x="10" y="10" width="1" height="1" fill="#c8c8c8"/><rect x="11" y="10" width="1" height="1" fill="#000000"/><rect x="10" y="11" width="1" height="1" fill="#000000"/><rect x="11" y="11" width="2" height="1" fill="#c8c8c8"/><rect x="13" y="11" width="1" height="1" fill="#000000"/><rect x="11" y="12" width="1" height="1" fill="#000000"/><rect x="12" y="12" width="2" height="1" fill="#c8c8c8"/><rect x="14" y="12" width="1" height="1" fill="#000000"/><rect x="12" y="13" width="1" height="1" fill="#000000"/><rect x="13" y="13" width="2" height="1" fill="#c8c8c8"/><rect x="15" y="13" width="1" height="1" fill="#000000"/><rect x="13" y="14" width="2" height="1" fill="#000000"/></svg><svg class="a" style="left:280px;top:57px" width="16" height="16" shape-rendering="crispEdges"><rect x="4" y="0" width="5" height="1" fill="#000000"/><rect x="3" y="1" width="1" height="1" fill="#000000"/><rect x="9" y="1" width="1" height="1" fill="#000000"/><rect x="2" y="2" width="1" height="1" fill="#000000"/><rect x="8" y="2" width="5" height="1" fill="#000000"/><rect x="1" y="3" width="1" height="1" fill="#000000"/><rect x="4" y="3" width="1" height="1" fill="#ffffff"/><rect x="7" y="3" width="2" height="1" fill="#000000"/><rect x="10" y="3" width="1" height="1" fill="#000000"/><rect x="12" y="3" width="2" height="1" fill="#000000"/><rect x="1" y="4" width="1" height="1" fill="#000000"/><rect x="3" y="4" width="1" height="1" fill="#ffffff"/><rect x="4" y="4" width="1" height="1" fill="#000000"/><rect x="8" y="4" width="2" height="1" fill="#000000"/><rect x="11" y="4" width="2" height="1" fill="#000000"/><rect x="1" y="5" width="1" height="1" fill="#000000"/><rect x="3" y="5" width="1" height="1" fill="#ffffff"/><rect x="9" y="5" width="3" height="1" fill="#000000"/><rect x="1" y="6" width="1" height="1" fill="#000000"/><rect x="3" y="6" width="1" height="1" fill="#ffffff"/><rect x="8" y="6" width="2" height="1" fill="#000000"/><rect x="11" y="6" width="2" height="1" fill="#000000"/><rect x="1" y="7" width="1" height="1" fill="#000000"/><rect x="7" y="7" width="2" height="1" fill="#000000"/><rect x="10" y="7" width="1" height="1" fill="#000000"/><rect x="12" y="7" width="2" height="1" fill="#000000"/><rect x="2" y="8" width="1" height="1" fill="#000000"/><rect x="8" y="8" width="5" height="1" fill="#000000"/><rect x="3" y="9" width="1" height="1" fill="#000000"/><rect x="9" y="9" width="2" height="1" fill="#000000"/><rect x="4" y="10" width="5" height="1" fill="#000000"/><rect x="9" y="10" width="1" height="1" fill="#ffffff"/><rect x="10" y="10" width="1" height="1" fill="#c8c8c8"/><rect x="11" y="10" width="1" height="1" fill="#000000"/><rect x="10" y="11" width="1" height="1" fill="#000000"/><rect x="11" y="11" width="2" height="1" fill="#c8c8c8"/><rect x="13" y="11" width="1" height="1" fill="#000000"/><rect x="11" y="12" width="1" height="1" fill="#000000"/><rect x="12" y="12" width="2" height="1" fill="#c8c8c8"/><rect x="14" y="12" width="1" height="1" fill="#000000"/><rect x="12" y="13" width="1" height="1" fill="#000000"/><rect x="13" y="13" width="2" height="1" fill="#c8c8c8"/><rect x="15" y="13" width="1" height="1" fill="#000000"/><rect x="13" y="14" width="2" height="1" fill="#000000"/></svg><svg class="a" style="left:311px;top:56px" width="16" height="16" shape-rendering="crispEdges"><rect x="6" y="1" width="2" height="1" fill="#000000"/><rect x="10" y="1" width="2" height="1" fill="#000000"/><rect x="5" y="2" width="1" height="1" fill="#000000"/><rect x="6" y="2" width="1" height="1" fill="#ffffff"/><rect x="7" y="2" width="1" height="1" fill="#000000"/><rect x="10" y="2" width="1" height="1" fill="#000000"/><rect x="11" y="2" width="1" height="1" fill="#1e9bff"/><rect x="12" y="2" width="1" height="1" fill="#000000"/><rect x="5" y="3" width="1" height="1" fill="#000000"/><rect x="6" y="3" width="1" height="1" fill="#ffffff"/><rect x="7" y="3" width="1" height="1" fill="#000000"/><rect x="10" y="3" width="1" height="1" fill="#000000"/><rect x="11" y="3" width="1" height="1" fill="#1e9bff"/><rect x="12" y="3" width="1" height="1" fill="#000000"/><rect x="4" y="4" width="1" height="1" fill="#000000"/><rect x="5" y="4" width="2" height="1" fill="#ffffff"/><rect x="7" y="4" width="1" height="1" fill="#000000"/><rect x="10" y="4" width="1" height="1" fill="#000000"/><rect x="11" y="4" width="2" height="1" fill="#1e9bff"/><rect x="13" y="4" width="1" height="1" fill="#000000"/><rect x="4" y="5" width="1" height="1" fill="#000000"/><rect x="5" y="5" width="2" height="1" fill="#ffffff"/><rect x="7" y="5" width="1" height="1" fill="#000000"/><rect x="10" y="5" width="1" height="1" fill="#000000"/><rect x="11" y="5" width="2" height="1" fill="#1e9bff"/><rect x="13" y="5" width="1" height="1" fill="#000000"/><rect x="3" y="6" width="1" height="1" fill="#000000"/><rect x="4" y="6" width="3" height="1" fill="#ffffff"/><rect x="7" y="6" width="1" height="1" fill="#000000"/><rect x="10" y="6" width="1" height="1" fill="#000000"/><rect x="11" y="6" width="3" height="1" fill="#1e9bff"/><rect x="14" y="6" width="1" height="1" fill="#000000"/><rect x="3" y="7" width="1" height="1" fill="#000000"/><rect x="4" y="7" width="3" height="1" fill="#ffffff"/><rect x="7" y="7" width="1" height="1" fill="#000000"/><rect x="10" y="7" width="1" height="1" fill="#000000"/><rect x="11" y="7" width="3" height="1" fill="#1e9bff"/><rect x="14" y="7" width="1" height="1" fill="#000000"/><rect x="2" y="8" width="1" height="1" fill="#000000"/><rect x="3" y="8" width="4" height="1" fill="#ffffff"/><rect x="7" y="8" width="1" height="1" fill="#000000"/><rect x="10" y="8" width="1" height="1" fill="#000000"/><rect x="11" y="8" width="4" height="1" fill="#1e9bff"/><rect x="15" y="8" width="1" height="1" fill="#000000"/><rect x="2" y="9" width="1" height="1" fill="#000000"/><rect x="3" y="9" width="4" height="1" fill="#ffffff"/><rect x="7" y="9" width="1" height="1" fill="#000000"/><rect x="10" y="9" width="1" height="1" fill="#000000"/><rect x="11" y="9" width="4" height="1" fill="#1e9bff"/><rect x="15" y="9" width="1" height="1" fill="#000000"/><rect x="1" y="10" width="1" height="1" fill="#000000"/><rect x="2" y="10" width="5" height="1" fill="#ffffff"/><rect x="7" y="10" width="1" height="1" fill="#000000"/><rect x="10" y="10" width="1" height="1" fill="#000000"/><rect x="11" y="10" width="4" height="1" fill="#1e9bff"/><rect x="15" y="10" width="1" height="1" fill="#000000"/><rect x="1" y="11" width="1" height="1" fill="#000000"/><rect x="2" y="11" width="5" height="1" fill="#ffffff"/><rect x="7" y="11" width="1" height="1" fill="#000000"/><rect x="10" y="11" width="1" height="1" fill="#000000"/><rect x="11" y="11" width="4" height="1" fill="#1e9bff"/><rect x="15" y="11" width="1" height="1" fill="#000000"/><rect x="1" y="12" width="1" height="1" fill="#000000"/><rect x="2" y="12" width="5" height="1" fill="#ffffff"/><rect x="7" y="12" width="1" height="1" fill="#000000"/><rect x="10" y="12" width="1" height="1" fill="#000000"/><rect x="11" y="12" width="4" height="1" fill="#1e9bff"/><rect x="15" y="12" width="1" height="1" fill="#000000"/><rect x="1" y="13" width="1" height="1" fill="#000000"/><rect x="2" y="13" width="5" height="1" fill="#ffffff"/><rect x="7" y="13" width="1" height="1" fill="#000000"/><rect x="10" y="13" width="1" height="1" fill="#000000"/><rect x="11" y="13" width="4" height="1" fill="#1e9bff"/><rect x="15" y="13" width="1" height="1" fill="#000000"/><rect x="1" y="14" width="7" height="1" fill="#000000"/><rect x="10" y="14" width="6" height="1" fill="#000000"/></svg><svg class="a" style="left:334px;top:56px" width="16" height="16" shape-rendering="crispEdges"><rect x="12" y="1" width="4" height="1" fill="#000000"/><rect x="9" y="2" width="3" height="1" fill="#000000"/><rect x="12" y="2" width="3" height="1" fill="#ffffff"/><rect x="15" y="2" width="1" height="1" fill="#000000"/><rect x="6" y="3" width="3" height="1" fill="#000000"/><rect x="9" y="3" width="6" height="1" fill="#ffffff"/><rect x="15" y="3" width="1" height="1" fill="#000000"/><rect x="3" y="4" width="3" height="1" fill="#000000"/><rect x="6" y="4" width="9" height="1" fill="#ffffff"/><rect x="15" y="4" width="1" height="1" fill="#000000"/><rect x="2" y="5" width="1" height="1" fill="#000000"/><rect x="3" y="5" width="12" height="1" fill="#ffffff"/><rect x="15" y="5" width="1" height="1" fill="#000000"/><rect x="2" y="6" width="14" height="1" fill="#000000"/><rect x="2" y="8" width="14" height="1" fill="#000000"/><rect x="2" y="9" width="1" height="1" fill="#000000"/><rect x="3" y="9" width="12" height="1" fill="#1e9bff"/><rect x="15" y="9" width="1" height="1" fill="#000000"/><rect x="3" y="10" width="3" height="1" fill="#000000"/><rect x="6" y="10" width="9" height="1" fill="#1e9bff"/><rect x="15" y="10" width="1" height="1" fill="#000000"/><rect x="6" y="11" width="3" height="1" fill="#000000"/><rect x="9" y="11" width="6" height="1" fill="#1e9bff"/><rect x="15" y="11" width="1" height="1" fill="#000000"/><rect x="9" y="12" width="3" height="1" fill="#000000"/><rect x="12" y="12" width="3" height="1" fill="#1e9bff"/><rect x="15" y="12" width="1" height="1" fill="#000000"/><rect x="12" y="13" width="4" height="1" fill="#000000"/></svg><svg class="a" style="left:365px;top:56px" width="16" height="16" shape-rendering="crispEdges"><rect x="6" y="1" width="2" height="1" fill="#000000"/><rect x="10" y="1" width="2" height="1" fill="#000000"/><rect x="6" y="2" width="1" height="1" fill="#000000"/><rect x="7" y="2" width="1" height="1" fill="#22ee22"/><rect x="8" y="2" width="1" height="1" fill="#000000"/><rect x="10" y="2" width="1" height="1" fill="#000000"/><rect x="11" y="2" width="1" height="1" fill="#1e9bff"/><rect x="12" y="2" width="1" height="1" fill="#000000"/><rect x="2" y="3" width="5" height="1" fill="#000000"/><rect x="7" y="3" width="2" height="1" fill="#22ee22"/><rect x="9" y="3" width="2" height="1" fill="#000000"/><rect x="11" y="3" width="1" height="1" fill="#1e9bff"/><rect x="12" y="3" width="1" height="1" fill="#000000"/><rect x="1" y="4" width="1" height="1" fill="#000000"/><rect x="2" y="4" width="7" height="1" fill="#22ee22"/><rect x="9" y="4" width="2" height="1" fill="#000000"/><rect x="11" y="4" width="2" height="1" fill="#1e9bff"/><rect x="13" y="4" width="1" height="1" fill="#000000"/><rect x="1" y="5" width="1" height="1" fill="#000000"/><rect x="2" y="5" width="1" height="1" fill="#22ee22"/><rect x="3" y="5" width="4" height="1" fill="#000000"/><rect x="7" y="5" width="2" height="1" fill="#22ee22"/><rect x="9" y="5" width="2" height="1" fill="#000000"/><rect x="11" y="5" width="2" height="1" fill="#1e9bff"/><rect x="13" y="5" width="1" height="1" fill="#000000"/><rect x="1" y="6" width="1" height="1" fill="#000000"/><rect x="2" y="6" width="1" height="1" fill="#22ee22"/><rect x="3" y="6" width="1" height="1" fill="#000000"/><rect x="6" y="6" width="1" height="1" fill="#000000"/><rect x="7" y="6" width="1" height="1" fill="#22ee22"/><rect x="8" y="6" width="1" height="1" fill="#000000"/><rect x="10" y="6" width="1" height="1" fill="#000000"/><rect x="11" y="6" width="3" height="1" fill="#1e9bff"/><rect x="14" y="6" width="1" height="1" fill="#000000"/><rect x="1" y="7" width="1" height="1" fill="#000000"/><rect x="2" y="7" width="1" height="1" fill="#22ee22"/><rect x="3" y="7" width="1" height="1" fill="#000000"/><rect x="6" y="7" width="2" height="1" fill="#000000"/><rect x="10" y="7" width="1" height="1" fill="#000000"/><rect x="11" y="7" width="3" height="1" fill="#1e9bff"/><rect x="14" y="7" width="1" height="1" fill="#000000"/><rect x="1" y="8" width="1" height="1" fill="#000000"/><rect x="2" y="8" width="1" height="1" fill="#22ee22"/><rect x="3" y="8" width="1" height="1" fill="#000000"/><rect x="7" y="8" width="1" height="1" fill="#000000"/><rect x="10" y="8" width="1" height="1" fill="#000000"/><rect x="11" y="8" width="3" height="1" fill="#1e9bff"/><rect x="14" y="8" width="1" height="1" fill="#000000"/><rect x="1" y="9" width="1" height="1" fill="#000000"/><rect x="2" y="9" width="1" height="1" fill="#22ee22"/><rect x="3" y="9" width="1" height="1" fill="#000000"/><rect x="6" y="9" width="1" height="1" fill="#000000"/><rect x="7" y="9" width="1" height="1" fill="#ffffff"/><rect x="8" y="9" width="1" height="1" fill="#000000"/><rect x="10" y="9" width="1" height="1" fill="#000000"/><rect x="11" y="9" width="4" height="1" fill="#1e9bff"/><rect x="15" y="9" width="1" height="1" fill="#000000"/><rect x="2" y="10" width="1" height="1" fill="#000000"/><rect x="5" y="10" width="1" height="1" fill="#000000"/><rect x="6" y="10" width="2" height="1" fill="#ffffff"/><rect x="8" y="10" width="1" height="1" fill="#000000"/><rect x="10" y="10" width="1" height="1" fill="#000000"/><rect x="11" y="10" width="4" height="1" fill="#1e9bff"/><rect x="15" y="10" width="1" height="1" fill="#000000"/><rect x="4" y="11" width="1" height="1" fill="#000000"/><rect x="5" y="11" width="3" height="1" fill="#ffffff"/><rect x="8" y="11" width="1" height="1" fill="#000000"/><rect x="10" y="11" width="1" height="1" fill="#000000"/><rect x="11" y="11" width="4" height="1" fill="#1e9bff"/><rect x="15" y="11" width="1" height="1" fill="#000000"/><rect x="3" y="12" width="1" height="1" fill="#000000"/><rect x="4" y="12" width="4" height="1" fill="#ffffff"/><rect x="8" y="12" width="1" height="1" fill="#000000"/><rect x="10" y="12" width="1" height="1" fill="#000000"/><rect x="11" y="12" width="4" height="1" fill="#1e9bff"/><rect x="15" y="12" width="1" height="1" fill="#000000"/><rect x="2" y="13" width="1" height="1" fill="#000000"/><rect x="3" y="13" width="5" height="1" fill="#ffffff"/><rect x="8" y="13" width="1" height="1" fill="#000000"/><rect x="10" y="13" width="1" height="1" fill="#000000"/><rect x="11" y="13" width="4" height="1" fill="#1e9bff"/><rect x="15" y="13" width="1" height="1" fill="#000000"/><rect x="1" y="14" width="8" height="1" fill="#000000"/><rect x="10" y="14" width="6" height="1" fill="#000000"/></svg><svg class="a" style="left:390px;top:56px" width="16" height="16" shape-rendering="crispEdges"><rect x="4" y="1" width="2" height="1" fill="#000000"/><rect x="8" y="1" width="2" height="1" fill="#000000"/><rect x="3" y="2" width="1" height="1" fill="#000000"/><rect x="4" y="2" width="1" height="1" fill="#1e9bff"/><rect x="5" y="2" width="1" height="1" fill="#000000"/><rect x="7" y="2" width="1" height="1" fill="#000000"/><rect x="8" y="2" width="1" height="1" fill="#22ee22"/><rect x="9" y="2" width="1" height="1" fill="#000000"/><rect x="3" y="3" width="1" height="1" fill="#000000"/><rect x="4" y="3" width="1" height="1" fill="#1e9bff"/><rect x="5" y="3" width="2" height="1" fill="#000000"/><rect x="7" y="3" width="2" height="1" fill="#22ee22"/><rect x="9" y="3" width="5" height="1" fill="#000000"/><rect x="2" y="4" width="1" height="1" fill="#000000"/><rect x="3" y="4" width="2" height="1" fill="#1e9bff"/><rect x="5" y="4" width="2" height="1" fill="#000000"/><rect x="7" y="4" width="7" height="1" fill="#22ee22"/><rect x="14" y="4" width="1" height="1" fill="#000000"/><rect x="2" y="5" width="1" height="1" fill="#000000"/><rect x="3" y="5" width="2" height="1" fill="#1e9bff"/><rect x="5" y="5" width="2" height="1" fill="#000000"/><rect x="7" y="5" width="2" height="1" fill="#22ee22"/><rect x="9" y="5" width="4" height="1" fill="#000000"/><rect x="13" y="5" width="1" height="1" fill="#22ee22"/><rect x="14" y="5" width="1" height="1" fill="#000000"/><rect x="1" y="6" width="1" height="1" fill="#000000"/><rect x="2" y="6" width="3" height="1" fill="#1e9bff"/><rect x="5" y="6" width="1" height="1" fill="#000000"/><rect x="7" y="6" width="1" height="1" fill="#000000"/><rect x="8" y="6" width="1" height="1" fill="#22ee22"/><rect x="9" y="6" width="1" height="1" fill="#000000"/><rect x="12" y="6" width="1" height="1" fill="#000000"/><rect x="13" y="6" width="1" height="1" fill="#22ee22"/><rect x="14" y="6" width="1" height="1" fill="#000000"/><rect x="1" y="7" width="1" height="1" fill="#000000"/><rect x="2" y="7" width="3" height="1" fill="#1e9bff"/><rect x="5" y="7" width="1" height="1" fill="#000000"/><rect x="8" y="7" width="2" height="1" fill="#000000"/><rect x="12" y="7" width="1" height="1" fill="#000000"/><rect x="13" y="7" width="1" height="1" fill="#22ee22"/><rect x="14" y="7" width="1" height="1" fill="#000000"/><rect x="1" y="8" width="1" height="1" fill="#000000"/><rect x="2" y="8" width="3" height="1" fill="#1e9bff"/><rect x="5" y="8" width="1" height="1" fill="#000000"/><rect x="8" y="8" width="1" height="1" fill="#000000"/><rect x="12" y="8" width="1" height="1" fill="#000000"/><rect x="13" y="8" width="1" height="1" fill="#22ee22"/><rect x="14" y="8" width="1" height="1" fill="#000000"/><rect x="0" y="9" width="1" height="1" fill="#000000"/><rect x="1" y="9" width="4" height="1" fill="#1e9bff"/><rect x="5" y="9" width="1" height="1" fill="#000000"/><rect x="7" y="9" width="1" height="1" fill="#000000"/><rect x="8" y="9" width="1" height="1" fill="#ffffff"/><rect x="9" y="9" width="1" height="1" fill="#000000"/><rect x="12" y="9" width="1" height="1" fill="#000000"/><rect x="13" y="9" width="1" height="1" fill="#22ee22"/><rect x="14" y="9" width="1" height="1" fill="#000000"/><rect x="0" y="10" width="1" height="1" fill="#000000"/><rect x="1" y="10" width="4" height="1" fill="#1e9bff"/><rect x="5" y="10" width="1" height="1" fill="#000000"/><rect x="7" y="10" width="1" height="1" fill="#000000"/><rect x="8" y="10" width="2" height="1" fill="#ffffff"/><rect x="10" y="10" width="1" height="1" fill="#000000"/><rect x="13" y="10" width="1" height="1" fill="#000000"/><rect x="0" y="11" width="1" height="1" fill="#000000"/><rect x="1" y="11" width="4" height="1" fill="#1e9bff"/><rect x="5" y="11" width="1" height="1" fill="#000000"/><rect x="7" y="11" width="1" height="1" fill="#000000"/><rect x="8" y="11" width="3" height="1" fill="#ffffff"/><rect x="11" y="11" width="1" height="1" fill="#000000"/><rect x="0" y="12" width="1" height="1" fill="#000000"/><rect x="1" y="12" width="4" height="1" fill="#1e9bff"/><rect x="5" y="12" width="1" height="1" fill="#000000"/><rect x="7" y="12" width="1" height="1" fill="#000000"/><rect x="8" y="12" width="4" height="1" fill="#ffffff"/><rect x="12" y="12" width="1" height="1" fill="#000000"/><rect x="0" y="13" width="1" height="1" fill="#000000"/><rect x="1" y="13" width="4" height="1" fill="#1e9bff"/><rect x="5" y="13" width="1" height="1" fill="#000000"/><rect x="7" y="13" width="1" height="1" fill="#000000"/><rect x="8" y="13" width="5" height="1" fill="#ffffff"/><rect x="13" y="13" width="1" height="1" fill="#000000"/><rect x="0" y="14" width="6" height="1" fill="#000000"/><rect x="7" y="14" width="8" height="1" fill="#000000"/></svg><svg class="a" style="left:411px;top:56px" width="17" height="16" shape-rendering="crispEdges"><rect x="5" y="1" width="2" height="1" fill="#000000"/><rect x="10" y="1" width="7" height="1" fill="#000000"/><rect x="5" y="2" width="1" height="1" fill="#000000"/><rect x="6" y="2" width="1" height="1" fill="#22ee22"/><rect x="7" y="2" width="1" height="1" fill="#000000"/><rect x="10" y="2" width="1" height="1" fill="#000000"/><rect x="11" y="2" width="5" height="1" fill="#ffffff"/><rect x="16" y="2" width="1" height="1" fill="#000000"/><rect x="2" y="3" width="3" height="1" fill="#000000"/><rect x="5" y="3" width="2" height="1" fill="#22ee22"/><rect x="7" y="3" width="1" height="1" fill="#000000"/><rect x="10" y="3" width="1" height="1" fill="#000000"/><rect x="11" y="3" width="4" height="1" fill="#ffffff"/><rect x="15" y="3" width="1" height="1" fill="#000000"/><rect x="1" y="4" width="1" height="1" fill="#000000"/><rect x="2" y="4" width="7" height="1" fill="#22ee22"/><rect x="9" y="4" width="2" height="1" fill="#000000"/><rect x="11" y="4" width="3" height="1" fill="#ffffff"/><rect x="14" y="4" width="1" height="1" fill="#000000"/><rect x="1" y="5" width="1" height="1" fill="#000000"/><rect x="2" y="5" width="1" height="1" fill="#22ee22"/><rect x="3" y="5" width="3" height="1" fill="#000000"/><rect x="6" y="5" width="2" height="1" fill="#22ee22"/><rect x="8" y="5" width="1" height="1" fill="#000000"/><rect x="10" y="5" width="1" height="1" fill="#000000"/><rect x="11" y="5" width="2" height="1" fill="#ffffff"/><rect x="13" y="5" width="1" height="1" fill="#000000"/><rect x="1" y="6" width="1" height="1" fill="#000000"/><rect x="2" y="6" width="1" height="1" fill="#22ee22"/><rect x="3" y="6" width="1" height="1" fill="#000000"/><rect x="5" y="6" width="1" height="1" fill="#000000"/><rect x="6" y="6" width="1" height="1" fill="#22ee22"/><rect x="7" y="6" width="1" height="1" fill="#000000"/><rect x="10" y="6" width="3" height="1" fill="#000000"/><rect x="14" y="6" width="1" height="1" fill="#000000"/><rect x="15" y="6" width="1" height="1" fill="#22ee22"/><rect x="16" y="6" width="1" height="1" fill="#000000"/><rect x="1" y="7" width="1" height="1" fill="#000000"/><rect x="2" y="7" width="1" height="1" fill="#22ee22"/><rect x="3" y="7" width="1" height="1" fill="#000000"/><rect x="6" y="7" width="1" height="1" fill="#000000"/><rect x="14" y="7" width="1" height="1" fill="#000000"/><rect x="15" y="7" width="1" height="1" fill="#22ee22"/><rect x="16" y="7" width="1" height="1" fill="#000000"/><rect x="1" y="8" width="1" height="1" fill="#000000"/><rect x="2" y="8" width="1" height="1" fill="#22ee22"/><rect x="3" y="8" width="1" height="1" fill="#000000"/><rect x="14" y="8" width="1" height="1" fill="#000000"/><rect x="15" y="8" width="1" height="1" fill="#22ee22"/><rect x="16" y="8" width="1" height="1" fill="#000000"/><rect x="1" y="9" width="1" height="1" fill="#000000"/><rect x="2" y="9" width="1" height="1" fill="#22ee22"/><rect x="3" y="9" width="1" height="1" fill="#000000"/><rect x="10" y="9" width="1" height="1" fill="#000000"/><rect x="11" y="9" width="1" height="1" fill="#22ee22"/><rect x="12" y="9" width="1" height="1" fill="#000000"/><rect x="14" y="9" width="1" height="1" fill="#000000"/><rect x="15" y="9" width="1" height="1" fill="#22ee22"/><rect x="16" y="9" width="1" height="1" fill="#000000"/><rect x="2" y="10" width="1" height="1" fill="#000000"/><rect x="5" y="10" width="1" height="1" fill="#000000"/><rect x="6" y="10" width="1" height="1" fill="#1e9bff"/><rect x="7" y="10" width="1" height="1" fill="#000000"/><rect x="9" y="10" width="1" height="1" fill="#000000"/><rect x="10" y="10" width="2" height="1" fill="#22ee22"/><rect x="12" y="10" width="3" height="1" fill="#000000"/><rect x="15" y="10" width="1" height="1" fill="#22ee22"/><rect x="16" y="10" width="1" height="1" fill="#000000"/><rect x="4" y="11" width="1" height="1" fill="#000000"/><rect x="5" y="11" width="2" height="1" fill="#1e9bff"/><rect x="7" y="11" width="2" height="1" fill="#000000"/><rect x="9" y="11" width="7" height="1" fill="#22ee22"/><rect x="16" y="11" width="1" height="1" fill="#000000"/><rect x="3" y="12" width="1" height="1" fill="#000000"/><rect x="4" y="12" width="3" height="1" fill="#1e9bff"/><rect x="7" y="12" width="1" height="1" fill="#000000"/><rect x="9" y="12" width="1" height="1" fill="#000000"/><rect x="10" y="12" width="2" height="1" fill="#22ee22"/><rect x="12" y="12" width="4" height="1" fill="#000000"/><rect x="2" y="13" width="1" height="1" fill="#000000"/><rect x="3" y="13" width="4" height="1" fill="#1e9bff"/><rect x="7" y="13" width="1" height="1" fill="#000000"/><rect x="10" y="13" width="1" height="1" fill="#000000"/><rect x="11" y="13" width="1" height="1" fill="#22ee22"/><rect x="12" y="13" width="1" height="1" fill="#000000"/><rect x="2" y="14" width="6" height="1" fill="#000000"/><rect x="11" y="14" width="1" height="1" fill="#000000"/></svg><svg class="a" style="left:446px;top:56px" width="16" height="16" shape-rendering="crispEdges"><rect x="2" y="2" width="2" height="1" fill="#000000"/><rect x="2" y="3" width="1" height="1" fill="#000000"/><rect x="3" y="3" width="1" height="1" fill="#109010"/><rect x="4" y="3" width="1" height="1" fill="#000000"/><rect x="2" y="4" width="1" height="1" fill="#000000"/><rect x="3" y="4" width="2" height="1" fill="#109010"/><rect x="5" y="4" width="1" height="1" fill="#000000"/><rect x="2" y="5" width="1" height="1" fill="#000000"/><rect x="3" y="5" width="3" height="1" fill="#109010"/><rect x="6" y="5" width="1" height="1" fill="#000000"/><rect x="2" y="6" width="1" height="1" fill="#000000"/><rect x="3" y="6" width="4" height="1" fill="#109010"/><rect x="7" y="6" width="1" height="1" fill="#000000"/><rect x="2" y="7" width="1" height="1" fill="#000000"/><rect x="3" y="7" width="5" height="1" fill="#109010"/><rect x="8" y="7" width="1" height="1" fill="#000000"/><rect x="2" y="8" width="1" height="1" fill="#000000"/><rect x="3" y="8" width="4" height="1" fill="#109010"/><rect x="7" y="8" width="1" height="1" fill="#000000"/><rect x="2" y="9" width="1" height="1" fill="#000000"/><rect x="3" y="9" width="3" height="1" fill="#109010"/><rect x="6" y="9" width="1" height="1" fill="#000000"/><rect x="2" y="10" width="1" height="1" fill="#000000"/><rect x="3" y="10" width="2" height="1" fill="#109010"/><rect x="5" y="10" width="1" height="1" fill="#000000"/><rect x="2" y="11" width="1" height="1" fill="#000000"/><rect x="3" y="11" width="1" height="1" fill="#109010"/><rect x="4" y="11" width="1" height="1" fill="#000000"/><rect x="2" y="12" width="2" height="1" fill="#000000"/></svg><svg class="a" style="left:466px;top:56px" width="16" height="16" shape-rendering="crispEdges"><rect x="5" y="3" width="6" height="1" fill="#000000"/><rect x="3" y="4" width="2" height="1" fill="#000000"/><rect x="5" y="4" width="6" height="1" fill="#ffffff"/><rect x="11" y="4" width="2" height="1" fill="#000000"/><rect x="2" y="5" width="1" height="1" fill="#000000"/><rect x="3" y="5" width="3" height="1" fill="#ffffff"/><rect x="6" y="5" width="4" height="1" fill="#0030f0"/><rect x="10" y="5" width="3" height="1" fill="#ffffff"/><rect x="13" y="5" width="1" height="1" fill="#000000"/><rect x="1" y="6" width="1" height="1" fill="#000000"/><rect x="2" y="6" width="3" height="1" fill="#ffffff"/><rect x="5" y="6" width="2" height="1" fill="#0030f0"/><rect x="7" y="6" width="2" height="1" fill="#000000"/><rect x="9" y="6" width="2" height="1" fill="#0030f0"/><rect x="11" y="6" width="3" height="1" fill="#ffffff"/><rect x="14" y="6" width="1" height="1" fill="#000000"/><rect x="1" y="7" width="1" height="1" fill="#000000"/><rect x="2" y="7" width="3" height="1" fill="#ffffff"/><rect x="5" y="7" width="1" height="1" fill="#0030f0"/><rect x="6" y="7" width="4" height="1" fill="#000000"/><rect x="10" y="7" width="1" height="1" fill="#0030f0"/><rect x="11" y="7" width="3" height="1" fill="#ffffff"/><rect x="14" y="7" width="1" height="1" fill="#000000"/><rect x="1" y="8" width="1" height="1" fill="#000000"/><rect x="2" y="8" width="3" height="1" fill="#ffffff"/><rect x="5" y="8" width="1" height="1" fill="#0030f0"/><rect x="6" y="8" width="4" height="1" fill="#000000"/><rect x="10" y="8" width="1" height="1" fill="#0030f0"/><rect x="11" y="8" width="3" height="1" fill="#ffffff"/><rect x="14" y="8" width="1" height="1" fill="#000000"/><rect x="1" y="9" width="1" height="1" fill="#000000"/><rect x="2" y="9" width="3" height="1" fill="#ffffff"/><rect x="5" y="9" width="2" height="1" fill="#0030f0"/><rect x="7" y="9" width="2" height="1" fill="#000000"/><rect x="9" y="9" width="2" height="1" fill="#0030f0"/><rect x="11" y="9" width="3" height="1" fill="#ffffff"/><rect x="14" y="9" width="1" height="1" fill="#000000"/><rect x="2" y="10" width="1" height="1" fill="#000000"/><rect x="3" y="10" width="3" height="1" fill="#ffffff"/><rect x="6" y="10" width="4" height="1" fill="#0030f0"/><rect x="10" y="10" width="3" height="1" fill="#ffffff"/><rect x="13" y="10" width="1" height="1" fill="#000000"/><rect x="3" y="11" width="2" height="1" fill="#000000"/><rect x="5" y="11" width="6" height="1" fill="#ffffff"/><rect x="11" y="11" width="2" height="1" fill="#000000"/><rect x="5" y="12" width="6" height="1" fill="#000000"/></svg><svg class="a" style="left:489px;top:56px" width="16" height="16" shape-rendering="crispEdges"><rect x="2" y="2" width="1" height="1" fill="#000000"/><rect x="7" y="2" width="2" height="1" fill="#000000"/><rect x="13" y="2" width="1" height="1" fill="#000000"/><rect x="1" y="3" width="1" height="1" fill="#000000"/><rect x="2" y="3" width="1" height="1" fill="#c8c8c8"/><rect x="3" y="3" width="1" height="1" fill="#000000"/><rect x="6" y="3" width="1" height="1" fill="#000000"/><rect x="7" y="3" width="2" height="1" fill="#8a8a8a"/><rect x="9" y="3" width="1" height="1" fill="#000000"/><rect x="12" y="3" width="1" height="1" fill="#000000"/><rect x="13" y="3" width="1" height="1" fill="#c8c8c8"/><rect x="14" y="3" width="1" height="1" fill="#000000"/><rect x="2" y="4" width="1" height="1" fill="#000000"/><rect x="3" y="4" width="1" height="1" fill="#c8c8c8"/><rect x="4" y="4" width="2" height="1" fill="#000000"/><rect x="6" y="4" width="4" height="1" fill="#8a8a8a"/><rect x="10" y="4" width="2" height="1" fill="#000000"/><rect x="12" y="4" width="1" height="1" fill="#c8c8c8"/><rect x="13" y="4" width="1" height="1" fill="#000000"/><rect x="3" y="5" width="2" height="1" fill="#000000"/><rect x="5" y="5" width="6" height="1" fill="#8a8a8a"/><rect x="11" y="5" width="2" height="1" fill="#000000"/><rect x="3" y="6" width="1" height="1" fill="#000000"/><rect x="4" y="6" width="3" height="1" fill="#8a8a8a"/><rect x="7" y="6" width="2" height="1" fill="#000000"/><rect x="9" y="6" width="3" height="1" fill="#8a8a8a"/><rect x="12" y="6" width="1" height="1" fill="#000000"/><rect x="2" y="7" width="1" height="1" fill="#000000"/><rect x="3" y="7" width="3" height="1" fill="#8a8a8a"/><rect x="6" y="7" width="1" height="1" fill="#000000"/><rect x="7" y="7" width="2" height="1" fill="#2a2a2a"/><rect x="9" y="7" width="1" height="1" fill="#000000"/><rect x="10" y="7" width="3" height="1" fill="#8a8a8a"/><rect x="13" y="7" width="1" height="1" fill="#000000"/><rect x="2" y="8" width="1" height="1" fill="#000000"/><rect x="3" y="8" width="3" height="1" fill="#8a8a8a"/><rect x="6" y="8" width="1" height="1" fill="#000000"/><rect x="7" y="8" width="2" height="1" fill="#2a2a2a"/><rect x="9" y="8" width="1" height="1" fill="#000000"/><rect x="10" y="8" width="3" height="1" fill="#8a8a8a"/><rect x="13" y="8" width="1" height="1" fill="#000000"/><rect x="3" y="9" width="1" height="1" fill="#000000"/><rect x="4" y="9" width="3" height="1" fill="#8a8a8a"/><rect x="7" y="9" width="2" height="1" fill="#000000"/><rect x="9" y="9" width="3" height="1" fill="#8a8a8a"/><rect x="12" y="9" width="1" height="1" fill="#000000"/><rect x="3" y="10" width="2" height="1" fill="#000000"/><rect x="5" y="10" width="6" height="1" fill="#8a8a8a"/><rect x="11" y="10" width="2" height="1" fill="#000000"/><rect x="2" y="11" width="1" height="1" fill="#000000"/><rect x="3" y="11" width="1" height="1" fill="#c8c8c8"/><rect x="4" y="11" width="2" height="1" fill="#000000"/><rect x="6" y="11" width="4" height="1" fill="#8a8a8a"/><rect x="10" y="11" width="2" height="1" fill="#000000"/><rect x="12" y="11" width="1" height="1" fill="#c8c8c8"/><rect x="13" y="11" width="1" height="1" fill="#000000"/><rect x="1" y="12" width="1" height="1" fill="#000000"/><rect x="2" y="12" width="1" height="1" fill="#c8c8c8"/><rect x="3" y="12" width="1" height="1" fill="#000000"/><rect x="6" y="12" width="1" height="1" fill="#000000"/><rect x="7" y="12" width="2" height="1" fill="#8a8a8a"/><rect x="9" y="12" width="1" height="1" fill="#000000"/><rect x="12" y="12" width="1" height="1" fill="#000000"/><rect x="13" y="12" width="1" height="1" fill="#c8c8c8"/><rect x="14" y="12" width="1" height="1" fill="#000000"/><rect x="2" y="13" width="1" height="1" fill="#000000"/><rect x="7" y="13" width="2" height="1" fill="#000000"/><rect x="13" y="13" width="1" height="1" fill="#000000"/></svg><svg class="a" style="left:513px;top:56px" width="16" height="16" shape-rendering="crispEdges"><rect x="2" y="2" width="7" height="1" fill="#000000"/><rect x="2" y="3" width="1" height="1" fill="#000000"/><rect x="3" y="3" width="5" height="1" fill="#ffffff"/><rect x="8" y="3" width="2" height="1" fill="#000000"/><rect x="2" y="4" width="1" height="1" fill="#000000"/><rect x="3" y="4" width="5" height="1" fill="#ffffff"/><rect x="8" y="4" width="1" height="1" fill="#000000"/><rect x="9" y="4" width="1" height="1" fill="#c8c8c8"/><rect x="10" y="4" width="1" height="1" fill="#000000"/><rect x="2" y="5" width="1" height="1" fill="#000000"/><rect x="3" y="5" width="5" height="1" fill="#ffffff"/><rect x="8" y="5" width="1" height="1" fill="#000000"/><rect x="9" y="5" width="2" height="1" fill="#c8c8c8"/><rect x="11" y="5" width="1" height="1" fill="#000000"/><rect x="2" y="6" width="1" height="1" fill="#000000"/><rect x="3" y="6" width="5" height="1" fill="#ffffff"/><rect x="8" y="6" width="4" height="1" fill="#000000"/><rect x="2" y="7" width="1" height="1" fill="#000000"/><rect x="3" y="7" width="8" height="1" fill="#ffffff"/><rect x="11" y="7" width="1" height="1" fill="#000000"/><rect x="2" y="8" width="1" height="1" fill="#000000"/><rect x="3" y="8" width="8" height="1" fill="#ffffff"/><rect x="11" y="8" width="1" height="1" fill="#000000"/><rect x="12" y="8" width="1" height="1" fill="#109010"/><rect x="13" y="8" width="1" height="1" fill="#000000"/><rect x="2" y="9" width="1" height="1" fill="#000000"/><rect x="3" y="9" width="7" height="1" fill="#ffffff"/><rect x="10" y="9" width="1" height="1" fill="#000000"/><rect x="11" y="9" width="1" height="1" fill="#109010"/><rect x="12" y="9" width="1" height="1" fill="#000000"/><rect x="2" y="10" width="1" height="1" fill="#000000"/><rect x="3" y="10" width="6" height="1" fill="#ffffff"/><rect x="9" y="10" width="1" height="1" fill="#000000"/><rect x="10" y="10" width="1" height="1" fill="#109010"/><rect x="11" y="10" width="2" height="1" fill="#000000"/><rect x="2" y="11" width="1" height="1" fill="#000000"/><rect x="3" y="11" width="1" height="1" fill="#ffffff"/><rect x="4" y="11" width="1" height="1" fill="#000000"/><rect x="5" y="11" width="1" height="1" fill="#109010"/><rect x="6" y="11" width="1" height="1" fill="#000000"/><rect x="7" y="11" width="1" height="1" fill="#ffffff"/><rect x="8" y="11" width="1" height="1" fill="#000000"/><rect x="9" y="11" width="1" height="1" fill="#109010"/><rect x="10" y="11" width="2" height="1" fill="#000000"/><rect x="2" y="12" width="1" height="1" fill="#000000"/><rect x="3" y="12" width="2" height="1" fill="#ffffff"/><rect x="5" y="12" width="1" height="1" fill="#000000"/><rect x="6" y="12" width="1" height="1" fill="#109010"/><rect x="7" y="12" width="1" height="1" fill="#000000"/><rect x="8" y="12" width="1" height="1" fill="#109010"/><rect x="9" y="12" width="1" height="1" fill="#000000"/><rect x="10" y="12" width="1" height="1" fill="#ffffff"/><rect x="11" y="12" width="1" height="1" fill="#000000"/><rect x="2" y="13" width="5" height="1" fill="#000000"/><rect x="7" y="13" width="1" height="1" fill="#109010"/><rect x="8" y="13" width="4" height="1" fill="#000000"/><rect x="7" y="14" width="1" height="1" fill="#000000"/></svg>

  <!-- canvas -->
  <div class="a" style="left:6px;top:82px;width:601px;height:590px;border:1px solid #8a8a8a;background:#000"></div>
  <svg width="512" height="512" viewBox="0 0 512 512" shape-rendering="crispEdges" style="position:absolute;left:7px;top:83px;display:block"><defs><pattern id="pw" width="4" height="4" patternUnits="userSpaceOnUse"><rect x="0" y="0" width="2" height="2" fill="#aaaaaa"/><rect x="2" y="2" width="2" height="2" fill="#aaaaaa"/></pattern><pattern id="pm" width="4" height="4" patternUnits="userSpaceOnUse"><rect x="0" y="0" width="2" height="2" fill="#aa00aa"/><rect x="2" y="2" width="2" height="2" fill="#aa00aa"/></pattern><pattern id="pb" width="4" height="4" patternUnits="userSpaceOnUse"><rect x="0" y="0" width="2" height="2" fill="#0000aa"/><rect x="2" y="2" width="2" height="2" fill="#0000aa"/></pattern><pattern id="pc" width="4" height="4" patternUnits="userSpaceOnUse"><rect x="0" y="0" width="2" height="2" fill="#00aaaa"/><rect x="2" y="2" width="2" height="2" fill="#00aaaa"/></pattern></defs><rect x="0" y="0" width="512" height="16" fill="url(#pw)"/><rect x="0" y="496" width="512" height="16" fill="url(#pw)"/><rect x="0" y="16" width="16" height="480" fill="url(#pw)"/><rect x="496" y="16" width="16" height="480" fill="url(#pw)"/><rect x="48" y="48" width="416" height="16" fill="url(#pm)"/><rect x="48" y="64" width="16" height="128" fill="url(#pm)"/><rect x="448" y="64" width="16" height="128" fill="url(#pm)"/><rect x="176" y="64" width="16" height="48" fill="url(#pm)"/><rect x="176" y="144" width="16" height="32" fill="url(#pm)"/><rect x="320" y="64" width="16" height="48" fill="url(#pm)"/><rect x="320" y="144" width="16" height="32" fill="url(#pm)"/><rect x="64" y="176" width="176" height="16" fill="url(#pm)"/><rect x="272" y="176" width="176" height="16" fill="url(#pm)"/><rect x="48" y="240" width="176" height="16" fill="url(#pb)"/><rect x="48" y="256" width="16" height="64" fill="url(#pb)"/><rect x="208" y="256" width="16" height="64" fill="url(#pb)"/><rect x="64" y="304" width="48" height="16" fill="url(#pb)"/><rect x="160" y="304" width="48" height="16" fill="url(#pb)"/><rect x="288" y="240" width="176" height="16" fill="url(#pb)"/><rect x="288" y="256" width="16" height="64" fill="url(#pb)"/><rect x="448" y="256" width="16" height="64" fill="url(#pb)"/><rect x="304" y="304" width="48" height="16" fill="url(#pb)"/><rect x="400" y="304" width="48" height="16" fill="url(#pb)"/><rect x="48" y="432" width="176" height="16" fill="url(#pc)"/><rect x="48" y="368" width="16" height="64" fill="url(#pc)"/><rect x="208" y="368" width="16" height="64" fill="url(#pc)"/><rect x="64" y="368" width="48" height="16" fill="url(#pc)"/><rect x="160" y="368" width="48" height="16" fill="url(#pc)"/><rect x="288" y="432" width="176" height="16" fill="url(#pc)"/><rect x="288" y="368" width="16" height="64" fill="url(#pc)"/><rect x="448" y="368" width="16" height="64" fill="url(#pc)"/><rect x="304" y="368" width="48" height="16" fill="url(#pc)"/><rect x="400" y="368" width="48" height="16" fill="url(#pc)"/><rect x="96" y="112" width="2" height="2" fill="#ffffff"/><rect x="102" y="112" width="2" height="2" fill="#a04c00"/><rect x="104" y="112" width="2" height="2" fill="#a04c00"/><rect x="110" y="112" width="2" height="2" fill="#ffffff"/><rect x="98" y="114" width="2" height="2" fill="#ffffff"/><rect x="102" y="114" width="2" height="2" fill="#ffffff"/><rect x="104" y="114" width="2" height="2" fill="#ffffff"/><rect x="108" y="114" width="2" height="2" fill="#ffffff"/><rect x="100" y="116" width="2" height="2" fill="#0000aa"/><rect x="102" y="116" width="2" height="2" fill="#0000aa"/><rect x="104" y="116" width="2" height="2" fill="#0000aa"/><rect x="106" y="116" width="2" height="2" fill="#0000aa"/><rect x="102" y="118" width="2" height="2" fill="#0000aa"/><rect x="104" y="118" width="2" height="2" fill="#0000aa"/><rect x="102" y="120" width="2" height="2" fill="#0000aa"/><rect x="104" y="120" width="2" height="2" fill="#0000aa"/><rect x="102" y="122" width="2" height="2" fill="#6a6a6a"/><rect x="104" y="122" width="2" height="2" fill="#6a6a6a"/><rect x="102" y="124" width="2" height="2" fill="#6a6a6a"/><rect x="104" y="124" width="2" height="2" fill="#6a6a6a"/><rect x="102" y="126" width="2" height="2" fill="#a04c00"/><rect x="104" y="126" width="2" height="2" fill="#a04c00"/><rect x="320" y="256" width="2" height="2" fill="#ffffff"/><rect x="326" y="256" width="2" height="2" fill="#a04c00"/><rect x="328" y="256" width="2" height="2" fill="#a04c00"/><rect x="334" y="256" width="2" height="2" fill="#ffffff"/><rect x="322" y="258" width="2" height="2" fill="#ffffff"/><rect x="326" y="258" width="2" height="2" fill="#ffffff"/><rect x="328" y="258" width="2" height="2" fill="#ffffff"/><rect x="332" y="258" width="2" height="2" fill="#ffffff"/><rect x="324" y="260" width="2" height="2" fill="#0000aa"/><rect x="326" y="260" width="2" height="2" fill="#0000aa"/><rect x="328" y="260" width="2" height="2" fill="#0000aa"/><rect x="330" y="260" width="2" height="2" fill="#0000aa"/><rect x="326" y="262" width="2" height="2" fill="#0000aa"/><rect x="328" y="262" width="2" height="2" fill="#0000aa"/><rect x="326" y="264" width="2" height="2" fill="#0000aa"/><rect x="328" y="264" width="2" height="2" fill="#0000aa"/><rect x="326" y="266" width="2" height="2" fill="#6a6a6a"/><rect x="328" y="266" width="2" height="2" fill="#6a6a6a"/><rect x="326" y="268" width="2" height="2" fill="#6a6a6a"/><rect x="328" y="268" width="2" height="2" fill="#6a6a6a"/><rect x="326" y="270" width="2" height="2" fill="#a04c00"/><rect x="328" y="270" width="2" height="2" fill="#a04c00"/><rect x="80" y="400" width="2" height="2" fill="#ffffff"/><rect x="86" y="400" width="2" height="2" fill="#a04c00"/><rect x="88" y="400" width="2" height="2" fill="#a04c00"/><rect x="94" y="400" width="2" height="2" fill="#ffffff"/><rect x="82" y="402" width="2" height="2" fill="#ffffff"/><rect x="86" y="402" width="2" height="2" fill="#ffffff"/><rect x="88" y="402" width="2" height="2" fill="#ffffff"/><rect x="92" y="402" width="2" height="2" fill="#ffffff"/><rect x="84" y="404" width="2" height="2" fill="#0000aa"/><rect x="86" y="404" width="2" height="2" fill="#0000aa"/><rect x="88" y="404" width="2" height="2" fill="#0000aa"/><rect x="90" y="404" width="2" height="2" fill="#0000aa"/><rect x="86" y="406" width="2" height="2" fill="#0000aa"/><rect x="88" y="406" width="2" height="2" fill="#0000aa"/><rect x="86" y="408" width="2" height="2" fill="#0000aa"/><rect x="88" y="408" width="2" height="2" fill="#0000aa"/><rect x="86" y="410" width="2" height="2" fill="#6a6a6a"/><rect x="88" y="410" width="2" height="2" fill="#6a6a6a"/><rect x="86" y="412" width="2" height="2" fill="#6a6a6a"/><rect x="88" y="412" width="2" height="2" fill="#6a6a6a"/><rect x="86" y="414" width="2" height="2" fill="#a04c00"/><rect x="88" y="414" width="2" height="2" fill="#a04c00"/><rect x="176" y="400" width="2" height="2" fill="#ffffff"/><rect x="182" y="400" width="2" height="2" fill="#a04c00"/><rect x="184" y="400" width="2" height="2" fill="#a04c00"/><rect x="190" y="400" width="2" height="2" fill="#ffffff"/><rect x="178" y="402" width="2" height="2" fill="#ffffff"/><rect x="182" y="402" width="2" height="2" fill="#ffffff"/><rect x="184" y="402" width="2" height="2" fill="#ffffff"/><rect x="188" y="402" width="2" height="2" fill="#ffffff"/><rect x="180" y="404" width="2" height="2" fill="#0000aa"/><rect x="182" y="404" width="2" height="2" fill="#0000aa"/><rect x="184" y="404" width="2" height="2" fill="#0000aa"/><rect x="186" y="404" width="2" height="2" fill="#0000aa"/><rect x="182" y="406" width="2" height="2" fill="#0000aa"/><rect x="184" y="406" width="2" height="2" fill="#0000aa"/><rect x="182" y="408" width="2" height="2" fill="#0000aa"/><rect x="184" y="408" width="2" height="2" fill="#0000aa"/><rect x="182" y="410" width="2" height="2" fill="#6a6a6a"/><rect x="184" y="410" width="2" height="2" fill="#6a6a6a"/><rect x="182" y="412" width="2" height="2" fill="#6a6a6a"/><rect x="184" y="412" width="2" height="2" fill="#6a6a6a"/><rect x="182" y="414" width="2" height="2" fill="#a04c00"/><rect x="184" y="414" width="2" height="2" fill="#a04c00"/><rect x="320" y="384" width="2" height="2" fill="#ffffff"/><rect x="326" y="384" width="2" height="2" fill="#a04c00"/><rect x="328" y="384" width="2" height="2" fill="#a04c00"/><rect x="334" y="384" width="2" height="2" fill="#ffffff"/><rect x="322" y="386" width="2" height="2" fill="#ffffff"/><rect x="326" y="386" width="2" height="2" fill="#ffffff"/><rect x="328" y="386" width="2" height="2" fill="#ffffff"/><rect x="332" y="386" width="2" height="2" fill="#ffffff"/><rect x="324" y="388" width="2" height="2" fill="#0000aa"/><rect x="326" y="388" width="2" height="2" fill="#0000aa"/><rect x="328" y="388" width="2" height="2" fill="#0000aa"/><rect x="330" y="388" width="2" height="2" fill="#0000aa"/><rect x="326" y="390" width="2" height="2" fill="#0000aa"/><rect x="328" y="390" width="2" height="2" fill="#0000aa"/><rect x="326" y="392" width="2" height="2" fill="#0000aa"/><rect x="328" y="392" width="2" height="2" fill="#0000aa"/><rect x="326" y="394" width="2" height="2" fill="#6a6a6a"/><rect x="328" y="394" width="2" height="2" fill="#6a6a6a"/><rect x="326" y="396" width="2" height="2" fill="#6a6a6a"/><rect x="328" y="396" width="2" height="2" fill="#6a6a6a"/><rect x="326" y="398" width="2" height="2" fill="#a04c00"/><rect x="328" y="398" width="2" height="2" fill="#a04c00"/><rect x="96" y="144" width="2" height="2" fill="#ffffff"/><rect x="102" y="144" width="2" height="2" fill="#a04c00"/><rect x="104" y="144" width="2" height="2" fill="#a04c00"/><rect x="110" y="144" width="2" height="2" fill="#ffffff"/><rect x="98" y="146" width="2" height="2" fill="#ffffff"/><rect x="100" y="146" width="2" height="2" fill="#a04c00"/><rect x="102" y="146" width="2" height="2" fill="#ffffff"/><rect x="104" y="146" width="2" height="2" fill="#ffffff"/><rect x="106" y="146" width="2" height="2" fill="#a04c00"/><rect x="108" y="146" width="2" height="2" fill="#ffffff"/><rect x="100" y="148" width="2" height="2" fill="#00aaaa"/><rect x="102" y="148" width="2" height="2" fill="#00aaaa"/><rect x="104" y="148" width="2" height="2" fill="#00aaaa"/><rect x="106" y="148" width="2" height="2" fill="#00aaaa"/><rect x="100" y="150" width="2" height="2" fill="#a04c00"/><rect x="102" y="150" width="2" height="2" fill="#00aaaa"/><rect x="104" y="150" width="2" height="2" fill="#00aaaa"/><rect x="106" y="150" width="2" height="2" fill="#a04c00"/><rect x="100" y="152" width="2" height="2" fill="#a04c00"/><rect x="102" y="152" width="2" height="2" fill="#b8a8a8"/><rect x="104" y="152" width="2" height="2" fill="#b8a8a8"/><rect x="106" y="152" width="2" height="2" fill="#a04c00"/><rect x="102" y="154" width="2" height="2" fill="#00aaaa"/><rect x="104" y="154" width="2" height="2" fill="#00aaaa"/><rect x="102" y="156" width="2" height="2" fill="#ffffff"/><rect x="104" y="156" width="2" height="2" fill="#ffffff"/><rect x="102" y="158" width="2" height="2" fill="#6a6a6a"/><rect x="104" y="158" width="2" height="2" fill="#6a6a6a"/><rect x="416" y="112" width="2" height="2" fill="#ffffff"/><rect x="422" y="112" width="2" height="2" fill="#a04c00"/><rect x="424" y="112" width="2" height="2" fill="#a04c00"/><rect x="430" y="112" width="2" height="2" fill="#ffffff"/><rect x="418" y="114" width="2" height="2" fill="#ffffff"/><rect x="420" y="114" width="2" height="2" fill="#a04c00"/><rect x="422" y="114" width="2" height="2" fill="#ffffff"/><rect x="424" y="114" width="2" height="2" fill="#ffffff"/><rect x="426" y="114" width="2" height="2" fill="#a04c00"/><rect x="428" y="114" width="2" height="2" fill="#ffffff"/><rect x="420" y="116" width="2" height="2" fill="#00aaaa"/><rect x="422" y="116" width="2" height="2" fill="#00aaaa"/><rect x="424" y="116" width="2" height="2" fill="#00aaaa"/><rect x="426" y="116" width="2" height="2" fill="#00aaaa"/><rect x="420" y="118" width="2" height="2" fill="#a04c00"/><rect x="422" y="118" width="2" height="2" fill="#00aaaa"/><rect x="424" y="118" width="2" height="2" fill="#00aaaa"/><rect x="426" y="118" width="2" height="2" fill="#a04c00"/><rect x="420" y="120" width="2" height="2" fill="#a04c00"/><rect x="422" y="120" width="2" height="2" fill="#b8a8a8"/><rect x="424" y="120" width="2" height="2" fill="#b8a8a8"/><rect x="426" y="120" width="2" height="2" fill="#a04c00"/><rect x="422" y="122" width="2" height="2" fill="#00aaaa"/><rect x="424" y="122" width="2" height="2" fill="#00aaaa"/><rect x="422" y="124" width="2" height="2" fill="#ffffff"/><rect x="424" y="124" width="2" height="2" fill="#ffffff"/><rect x="422" y="126" width="2" height="2" fill="#6a6a6a"/><rect x="424" y="126" width="2" height="2" fill="#6a6a6a"/><rect x="384" y="128" width="2" height="2" fill="#ffffff"/><rect x="390" y="128" width="2" height="2" fill="#a04c00"/><rect x="392" y="128" width="2" height="2" fill="#a04c00"/><rect x="398" y="128" width="2" height="2" fill="#ffffff"/><rect x="386" y="130" width="2" height="2" fill="#ffffff"/><rect x="388" y="130" width="2" height="2" fill="#a04c00"/><rect x="390" y="130" width="2" height="2" fill="#ffffff"/><rect x="392" y="130" width="2" height="2" fill="#ffffff"/><rect x="394" y="130" width="2" height="2" fill="#a04c00"/><rect x="396" y="130" width="2" height="2" fill="#ffffff"/><rect x="388" y="132" width="2" height="2" fill="#00aaaa"/><rect x="390" y="132" width="2" height="2" fill="#00aaaa"/><rect x="392" y="132" width="2" height="2" fill="#00aaaa"/><rect x="394" y="132" width="2" height="2" fill="#00aaaa"/><rect x="388" y="134" width="2" height="2" fill="#a04c00"/><rect x="390" y="134" width="2" height="2" fill="#00aaaa"/><rect x="392" y="134" width="2" height="2" fill="#00aaaa"/><rect x="394" y="134" width="2" height="2" fill="#a04c00"/><rect x="388" y="136" width="2" height="2" fill="#a04c00"/><rect x="390" y="136" width="2" height="2" fill="#b8a8a8"/><rect x="392" y="136" width="2" height="2" fill="#b8a8a8"/><rect x="394" y="136" width="2" height="2" fill="#a04c00"/><rect x="390" y="138" width="2" height="2" fill="#00aaaa"/><rect x="392" y="138" width="2" height="2" fill="#00aaaa"/><rect x="390" y="140" width="2" height="2" fill="#ffffff"/><rect x="392" y="140" width="2" height="2" fill="#ffffff"/><rect x="390" y="142" width="2" height="2" fill="#6a6a6a"/><rect x="392" y="142" width="2" height="2" fill="#6a6a6a"/><rect x="80" y="272" width="2" height="2" fill="#ffffff"/><rect x="86" y="272" width="2" height="2" fill="#a04c00"/><rect x="88" y="272" width="2" height="2" fill="#a04c00"/><rect x="94" y="272" width="2" height="2" fill="#ffffff"/><rect x="82" y="274" width="2" height="2" fill="#ffffff"/><rect x="84" y="274" width="2" height="2" fill="#a04c00"/><rect x="86" y="274" width="2" height="2" fill="#ffffff"/><rect x="88" y="274" width="2" height="2" fill="#ffffff"/><rect x="90" y="274" width="2" height="2" fill="#a04c00"/><rect x="92" y="274" width="2" height="2" fill="#ffffff"/><rect x="84" y="276" width="2" height="2" fill="#00aaaa"/><rect x="86" y="276" width="2" height="2" fill="#00aaaa"/><rect x="88" y="276" width="2" height="2" fill="#00aaaa"/><rect x="90" y="276" width="2" height="2" fill="#00aaaa"/><rect x="84" y="278" width="2" height="2" fill="#a04c00"/><rect x="86" y="278" width="2" height="2" fill="#00aaaa"/><rect x="88" y="278" width="2" height="2" fill="#00aaaa"/><rect x="90" y="278" width="2" height="2" fill="#a04c00"/><rect x="84" y="280" width="2" height="2" fill="#a04c00"/><rect x="86" y="280" width="2" height="2" fill="#b8a8a8"/><rect x="88" y="280" width="2" height="2" fill="#b8a8a8"/><rect x="90" y="280" width="2" height="2" fill="#a04c00"/><rect x="86" y="282" width="2" height="2" fill="#00aaaa"/><rect x="88" y="282" width="2" height="2" fill="#00aaaa"/><rect x="86" y="284" width="2" height="2" fill="#ffffff"/><rect x="88" y="284" width="2" height="2" fill="#ffffff"/><rect x="86" y="286" width="2" height="2" fill="#6a6a6a"/><rect x="88" y="286" width="2" height="2" fill="#6a6a6a"/><rect x="352" y="400" width="2" height="2" fill="#ffffff"/><rect x="358" y="400" width="2" height="2" fill="#a04c00"/><rect x="360" y="400" width="2" height="2" fill="#a04c00"/><rect x="366" y="400" width="2" height="2" fill="#ffffff"/><rect x="354" y="402" width="2" height="2" fill="#ffffff"/><rect x="356" y="402" width="2" height="2" fill="#a04c00"/><rect x="358" y="402" width="2" height="2" fill="#ffffff"/><rect x="360" y="402" width="2" height="2" fill="#ffffff"/><rect x="362" y="402" width="2" height="2" fill="#a04c00"/><rect x="364" y="402" width="2" height="2" fill="#ffffff"/><rect x="356" y="404" width="2" height="2" fill="#00aaaa"/><rect x="358" y="404" width="2" height="2" fill="#00aaaa"/><rect x="360" y="404" width="2" height="2" fill="#00aaaa"/><rect x="362" y="404" width="2" height="2" fill="#00aaaa"/><rect x="356" y="406" width="2" height="2" fill="#a04c00"/><rect x="358" y="406" width="2" height="2" fill="#00aaaa"/><rect x="360" y="406" width="2" height="2" fill="#00aaaa"/><rect x="362" y="406" width="2" height="2" fill="#a04c00"/><rect x="356" y="408" width="2" height="2" fill="#a04c00"/><rect x="358" y="408" width="2" height="2" fill="#b8a8a8"/><rect x="360" y="408" width="2" height="2" fill="#b8a8a8"/><rect x="362" y="408" width="2" height="2" fill="#a04c00"/><rect x="358" y="410" width="2" height="2" fill="#00aaaa"/><rect x="360" y="410" width="2" height="2" fill="#00aaaa"/><rect x="358" y="412" width="2" height="2" fill="#ffffff"/><rect x="360" y="412" width="2" height="2" fill="#ffffff"/><rect x="358" y="414" width="2" height="2" fill="#6a6a6a"/><rect x="360" y="414" width="2" height="2" fill="#6a6a6a"/><rect x="246" y="272" width="2" height="2" fill="#aa0000"/><rect x="248" y="272" width="2" height="2" fill="#aa0000"/><rect x="250" y="272" width="2" height="2" fill="#aa0000"/><rect x="246" y="274" width="2" height="2" fill="#55ff55"/><rect x="248" y="274" width="2" height="2" fill="#aa0000"/><rect x="250" y="274" width="2" height="2" fill="#55ff55"/><rect x="246" y="276" width="2" height="2" fill="#aa0000"/><rect x="248" y="276" width="2" height="2" fill="#aa0000"/><rect x="250" y="276" width="2" height="2" fill="#aa0000"/><rect x="244" y="278" width="2" height="2" fill="#aa0000"/><rect x="246" y="278" width="2" height="2" fill="#aa0000"/><rect x="248" y="278" width="2" height="2" fill="#aa0000"/><rect x="250" y="278" width="2" height="2" fill="#aa0000"/><rect x="252" y="278" width="2" height="2" fill="#aa0000"/><rect x="242" y="280" width="2" height="2" fill="#aa0000"/><rect x="246" y="280" width="2" height="2" fill="#aa0000"/><rect x="248" y="280" width="2" height="2" fill="#aa0000"/><rect x="250" y="280" width="2" height="2" fill="#aa0000"/><rect x="254" y="280" width="2" height="2" fill="#aa0000"/><rect x="242" y="282" width="2" height="2" fill="#aa0000"/><rect x="246" y="282" width="2" height="2" fill="#aa0000"/><rect x="248" y="282" width="2" height="2" fill="#aa0000"/><rect x="250" y="282" width="2" height="2" fill="#aa0000"/><rect x="254" y="282" width="2" height="2" fill="#aa0000"/><rect x="246" y="284" width="2" height="2" fill="#aa0000"/><rect x="250" y="284" width="2" height="2" fill="#aa0000"/><rect x="244" y="286" width="2" height="2" fill="#aa0000"/><rect x="246" y="286" width="2" height="2" fill="#aa0000"/><rect x="250" y="286" width="2" height="2" fill="#aa0000"/><rect x="252" y="286" width="2" height="2" fill="#aa0000"/><rect x="264" y="464" width="2" height="2" fill="#55ff55"/><rect x="262" y="466" width="2" height="2" fill="#b00000"/><rect x="264" y="466" width="2" height="2" fill="#55ff55"/><rect x="266" y="466" width="2" height="2" fill="#b00000"/><rect x="258" y="468" width="2" height="2" fill="#b00000"/><rect x="260" y="468" width="2" height="2" fill="#00aa00"/><rect x="262" y="468" width="2" height="2" fill="#55ff55"/><rect x="264" y="468" width="2" height="2" fill="#55ff55"/><rect x="266" y="468" width="2" height="2" fill="#55ff55"/><rect x="268" y="468" width="2" height="2" fill="#00aa00"/><rect x="270" y="468" width="2" height="2" fill="#b00000"/><rect x="258" y="470" width="2" height="2" fill="#b00000"/><rect x="260" y="470" width="2" height="2" fill="#55ff55"/><rect x="262" y="470" width="2" height="2" fill="#55ff55"/><rect x="264" y="470" width="2" height="2" fill="#9a9a9a"/><rect x="266" y="470" width="2" height="2" fill="#9a9a9a"/><rect x="268" y="470" width="2" height="2" fill="#55ff55"/><rect x="270" y="470" width="2" height="2" fill="#b00000"/><rect x="260" y="472" width="2" height="2" fill="#55ff55"/><rect x="262" y="472" width="2" height="2" fill="#55ff55"/><rect x="264" y="472" width="2" height="2" fill="#9a9a9a"/><rect x="266" y="472" width="2" height="2" fill="#9a9a9a"/><rect x="268" y="472" width="2" height="2" fill="#55ff55"/><rect x="258" y="474" width="2" height="2" fill="#b00000"/><rect x="260" y="474" width="2" height="2" fill="#00aa00"/><rect x="262" y="474" width="2" height="2" fill="#55ff55"/><rect x="264" y="474" width="2" height="2" fill="#55ff55"/><rect x="266" y="474" width="2" height="2" fill="#55ff55"/><rect x="268" y="474" width="2" height="2" fill="#00aa00"/><rect x="270" y="474" width="2" height="2" fill="#b00000"/><rect x="258" y="476" width="2" height="2" fill="#b00000"/><rect x="260" y="476" width="2" height="2" fill="#00aa00"/><rect x="262" y="476" width="2" height="2" fill="#00aa00"/><rect x="264" y="476" width="2" height="2" fill="#00aa00"/><rect x="266" y="476" width="2" height="2" fill="#00aa00"/><rect x="268" y="476" width="2" height="2" fill="#00aa00"/><rect x="270" y="476" width="2" height="2" fill="#b00000"/><rect x="262" y="478" width="2" height="2" fill="#aa0000"/><rect x="264" y="478" width="2" height="2" fill="#aa0000"/><rect x="266" y="478" width="2" height="2" fill="#aa0000"/><rect x="258" y="480" width="2" height="2" fill="#ff5555"/><rect x="260" y="480" width="2" height="2" fill="#ff5555"/><rect x="266" y="480" width="2" height="2" fill="#ff5555"/><rect x="268" y="480" width="2" height="2" fill="#ff5555"/><rect x="256" y="482" width="2" height="2" fill="#ff5555"/><rect x="260" y="482" width="2" height="2" fill="#55ffff"/><rect x="262" y="482" width="2" height="2" fill="#aa0000"/><rect x="264" y="482" width="2" height="2" fill="#aa0000"/><rect x="266" y="482" width="2" height="2" fill="#55ffff"/><rect x="270" y="482" width="2" height="2" fill="#ff5555"/><rect x="258" y="484" width="2" height="2" fill="#55ffff"/><rect x="260" y="484" width="2" height="2" fill="#ffff55"/><rect x="262" y="484" width="2" height="2" fill="#ffff55"/><rect x="264" y="484" width="2" height="2" fill="#ffff55"/><rect x="266" y="484" width="2" height="2" fill="#ffff55"/><rect x="268" y="484" width="2" height="2" fill="#55ffff"/><rect x="262" y="486" width="2" height="2" fill="#ffff55"/><rect x="264" y="486" width="2" height="2" fill="#ffff55"/><rect x="260" y="488" width="2" height="2" fill="#ffff55"/><rect x="262" y="488" width="2" height="2" fill="#ffff55"/><rect x="264" y="488" width="2" height="2" fill="#ffff55"/><rect x="266" y="488" width="2" height="2" fill="#ffff55"/><rect x="262" y="490" width="2" height="2" fill="#ffff55"/><rect x="264" y="490" width="2" height="2" fill="#ffff55"/><rect x="258" y="492" width="2" height="2" fill="#ff5555"/><rect x="260" y="492" width="2" height="2" fill="#ffff55"/><rect x="262" y="492" width="2" height="2" fill="#ffff55"/><rect x="264" y="492" width="2" height="2" fill="#ffff55"/><rect x="266" y="492" width="2" height="2" fill="#ffff55"/><rect x="268" y="492" width="2" height="2" fill="#ff5555"/><rect x="260" y="494" width="2" height="2" fill="#ff5555"/><rect x="262" y="494" width="2" height="2" fill="#55ffff"/><rect x="264" y="494" width="2" height="2" fill="#55ffff"/><rect x="266" y="494" width="2" height="2" fill="#ff5555"/></svg>

  <!-- right panel: dropdown -->
  <div class="a" style="left:617px;top:82px;width:315px;height:24px;border:1px solid #9a9a9a;background:#1a1a1a"></div>
  <div class="a" style="left:619px;top:84px;width:294px;height:20px;background:#1f1f1f"></div>
  <div class="a" style="left:913px;top:83px;width:18px;height:22px;background:#383838"></div>
  <svg class="a" style="left:918px;top:92px" width="10" height="7"><path d="M1 1 L5 5 L9 1" stroke="#ddd" stroke-width="1" fill="none"/></svg>
  <svg class="a" style="left:624px;top:86px" width="16" height="16" shape-rendering="crispEdges"><rect x="5" y="3" width="6" height="1" fill="#000000"/><rect x="3" y="4" width="2" height="1" fill="#000000"/><rect x="5" y="4" width="6" height="1" fill="#ffffff"/><rect x="11" y="4" width="2" height="1" fill="#000000"/><rect x="2" y="5" width="1" height="1" fill="#000000"/><rect x="3" y="5" width="3" height="1" fill="#ffffff"/><rect x="6" y="5" width="4" height="1" fill="#0030f0"/><rect x="10" y="5" width="3" height="1" fill="#ffffff"/><rect x="13" y="5" width="1" height="1" fill="#000000"/><rect x="1" y="6" width="1" height="1" fill="#000000"/><rect x="2" y="6" width="3" height="1" fill="#ffffff"/><rect x="5" y="6" width="2" height="1" fill="#0030f0"/><rect x="7" y="6" width="2" height="1" fill="#000000"/><rect x="9" y="6" width="2" height="1" fill="#0030f0"/><rect x="11" y="6" width="3" height="1" fill="#ffffff"/><rect x="14" y="6" width="1" height="1" fill="#000000"/><rect x="1" y="7" width="1" height="1" fill="#000000"/><rect x="2" y="7" width="3" height="1" fill="#ffffff"/><rect x="5" y="7" width="1" height="1" fill="#0030f0"/><rect x="6" y="7" width="4" height="1" fill="#000000"/><rect x="10" y="7" width="1" height="1" fill="#0030f0"/><rect x="11" y="7" width="3" height="1" fill="#ffffff"/><rect x="14" y="7" width="1" height="1" fill="#000000"/><rect x="1" y="8" width="1" height="1" fill="#000000"/><rect x="2" y="8" width="3" height="1" fill="#ffffff"/><rect x="5" y="8" width="1" height="1" fill="#0030f0"/><rect x="6" y="8" width="4" height="1" fill="#000000"/><rect x="10" y="8" width="1" height="1" fill="#0030f0"/><rect x="11" y="8" width="3" height="1" fill="#ffffff"/><rect x="14" y="8" width="1" height="1" fill="#000000"/><rect x="1" y="9" width="1" height="1" fill="#000000"/><rect x="2" y="9" width="3" height="1" fill="#ffffff"/><rect x="5" y="9" width="2" height="1" fill="#0030f0"/><rect x="7" y="9" width="2" height="1" fill="#000000"/><rect x="9" y="9" width="2" height="1" fill="#0030f0"/><rect x="11" y="9" width="3" height="1" fill="#ffffff"/><rect x="14" y="9" width="1" height="1" fill="#000000"/><rect x="2" y="10" width="1" height="1" fill="#000000"/><rect x="3" y="10" width="3" height="1" fill="#ffffff"/><rect x="6" y="10" width="4" height="1" fill="#0030f0"/><rect x="10" y="10" width="3" height="1" fill="#ffffff"/><rect x="13" y="10" width="1" height="1" fill="#000000"/><rect x="3" y="11" width="2" height="1" fill="#000000"/><rect x="5" y="11" width="6" height="1" fill="#ffffff"/><rect x="11" y="11" width="2" height="1" fill="#000000"/><rect x="5" y="12" width="6" height="1" fill="#000000"/></svg>
  <div class="t" style="left:645px;top:88px;transform:scaleX(0.95);transform-origin:0 0">Layer #0 (Walls)</div>

  <!-- list -->
  <div class="a" style="left:617px;top:116px;width:315px;height:414px;border:1px solid #7a7a7a;background:#191919"></div>
  <div class="sw" style="left:623px;top:118px"><svg width="16" height="16" shape-rendering="crispEdges" style="display:block"><defs><pattern id="s000000" width="4" height="4" patternUnits="userSpaceOnUse"><rect width="4" height="4" fill="#000"/><rect x="0" y="0" width="2" height="2" fill="#000000"/><rect x="2" y="2" width="2" height="2" fill="#000000"/></pattern></defs><rect width="16" height="16" fill="url(#s000000)"/></svg></div><div class="t" style="left:641px;top:119px;line-height:16px">0 - Nothing</div><div class="sw" style="left:623px;top:137px"><svg width="16" height="16" shape-rendering="crispEdges" style="display:block"><defs><pattern id="s0000aa" width="4" height="4" patternUnits="userSpaceOnUse"><rect width="4" height="4" fill="#000"/><rect x="0" y="0" width="2" height="2" fill="#0000aa"/><rect x="2" y="2" width="2" height="2" fill="#0000aa"/></pattern></defs><rect width="16" height="16" fill="url(#s0000aa)"/></svg></div><div class="t" style="left:641px;top:138px;line-height:16px">1 - Blue Wall (E/W)</div><div class="sw" style="left:623px;top:156px"><svg width="16" height="16" shape-rendering="crispEdges" style="display:block"><defs><pattern id="s00aa00" width="4" height="4" patternUnits="userSpaceOnUse"><rect width="4" height="4" fill="#000"/><rect x="0" y="0" width="2" height="2" fill="#00aa00"/><rect x="2" y="2" width="2" height="2" fill="#00aa00"/></pattern></defs><rect width="16" height="16" fill="url(#s00aa00)"/></svg></div><div class="t" style="left:641px;top:157px;line-height:16px">2 - Green Wall (E/W)</div><div class="sw" style="left:623px;top:175px"><svg width="16" height="16" shape-rendering="crispEdges" style="display:block"><defs><pattern id="s00aaaa" width="4" height="4" patternUnits="userSpaceOnUse"><rect width="4" height="4" fill="#000"/><rect x="0" y="0" width="2" height="2" fill="#00aaaa"/><rect x="2" y="2" width="2" height="2" fill="#00aaaa"/></pattern></defs><rect width="16" height="16" fill="url(#s00aaaa)"/></svg></div><div class="t" style="left:641px;top:176px;line-height:16px">3 - Cyan Wall (E/W)</div><div class="sw" style="left:623px;top:194px"><svg width="16" height="16" shape-rendering="crispEdges" style="display:block"><defs><pattern id="saa0000" width="4" height="4" patternUnits="userSpaceOnUse"><rect width="4" height="4" fill="#000"/><rect x="0" y="0" width="2" height="2" fill="#aa0000"/><rect x="2" y="2" width="2" height="2" fill="#aa0000"/></pattern></defs><rect width="16" height="16" fill="url(#saa0000)"/></svg></div><div class="t" style="left:641px;top:195px;line-height:16px">4 - Red Wall (E/W)</div><div class="sw" style="left:623px;top:213px"><svg width="16" height="16" shape-rendering="crispEdges" style="display:block"><defs><pattern id="saa00aa" width="4" height="4" patternUnits="userSpaceOnUse"><rect width="4" height="4" fill="#000"/><rect x="0" y="0" width="2" height="2" fill="#aa00aa"/><rect x="2" y="2" width="2" height="2" fill="#aa00aa"/></pattern></defs><rect width="16" height="16" fill="url(#saa00aa)"/></svg></div><div class="t" style="left:641px;top:214px;line-height:16px">5 - Magenta Wall (E/W)</div><div class="sw" style="left:623px;top:232px"><svg width="16" height="16" shape-rendering="crispEdges" style="display:block"><defs><pattern id="saa5500" width="4" height="4" patternUnits="userSpaceOnUse"><rect width="4" height="4" fill="#000"/><rect x="0" y="0" width="2" height="2" fill="#aa5500"/><rect x="2" y="2" width="2" height="2" fill="#aa5500"/></pattern></defs><rect width="16" height="16" fill="url(#saa5500)"/></svg></div><div class="t" style="left:641px;top:233px;line-height:16px">6 - Brown Wall (E/W)</div><div class="sw" style="left:623px;top:251px"><svg width="16" height="16" shape-rendering="crispEdges" style="display:block"><defs><pattern id="saaaaaa" width="4" height="4" patternUnits="userSpaceOnUse"><rect width="4" height="4" fill="#000"/><rect x="0" y="0" width="2" height="2" fill="#aaaaaa"/><rect x="2" y="2" width="2" height="2" fill="#aaaaaa"/></pattern></defs><rect width="16" height="16" fill="url(#saaaaaa)"/></svg></div><div class="t" style="left:641px;top:252px;line-height:16px">7 - Light Gray Wall (E/W)</div><div class="sw" style="left:623px;top:270px"><svg width="16" height="16" shape-rendering="crispEdges" style="display:block"><defs><pattern id="s555555" width="4" height="4" patternUnits="userSpaceOnUse"><rect width="4" height="4" fill="#000"/><rect x="0" y="0" width="2" height="2" fill="#555555"/><rect x="2" y="2" width="2" height="2" fill="#555555"/></pattern></defs><rect width="16" height="16" fill="url(#s555555)"/></svg></div><div class="t" style="left:641px;top:271px;line-height:16px">8 - Dark Gray Wall (N/S)</div><div class="sw" style="left:623px;top:289px"><svg width="16" height="16" shape-rendering="crispEdges" style="display:block"><defs><pattern id="s5555ff" width="4" height="4" patternUnits="userSpaceOnUse"><rect width="4" height="4" fill="#000"/><rect x="0" y="0" width="2" height="2" fill="#5555ff"/><rect x="2" y="2" width="2" height="2" fill="#5555ff"/></pattern></defs><rect width="16" height="16" fill="url(#s5555ff)"/></svg></div><div class="t" style="left:641px;top:290px;line-height:16px">9 - Bright Blue Wall (N/S)</div><div class="sw" style="left:623px;top:308px"><svg width="16" height="16" shape-rendering="crispEdges" style="display:block"><defs><pattern id="s55ff55" width="4" height="4" patternUnits="userSpaceOnUse"><rect width="4" height="4" fill="#000"/><rect x="0" y="0" width="2" height="2" fill="#55ff55"/><rect x="2" y="2" width="2" height="2" fill="#55ff55"/></pattern></defs><rect width="16" height="16" fill="url(#s55ff55)"/></svg></div><div class="t" style="left:641px;top:309px;line-height:16px">10 - Bright Green Wall (N/S)</div><div class="sw" style="left:623px;top:327px"><svg width="16" height="16" shape-rendering="crispEdges" style="display:block"><defs><pattern id="s55ffff" width="4" height="4" patternUnits="userSpaceOnUse"><rect width="4" height="4" fill="#000"/><rect x="0" y="0" width="2" height="2" fill="#55ffff"/><rect x="2" y="2" width="2" height="2" fill="#55ffff"/></pattern></defs><rect width="16" height="16" fill="url(#s55ffff)"/></svg></div><div class="t" style="left:641px;top:328px;line-height:16px">11 - Bright Cyan Wall (N/S)</div><div class="sw" style="left:623px;top:346px"><svg width="16" height="16" shape-rendering="crispEdges" style="display:block"><defs><pattern id="sff5555" width="4" height="4" patternUnits="userSpaceOnUse"><rect width="4" height="4" fill="#000"/><rect x="0" y="0" width="2" height="2" fill="#ff5555"/><rect x="2" y="2" width="2" height="2" fill="#ff5555"/></pattern></defs><rect width="16" height="16" fill="url(#sff5555)"/></svg></div><div class="t" style="left:641px;top:347px;line-height:16px">12 - Bright Red Wall (N/S)</div><div class="sw" style="left:623px;top:365px"><svg width="16" height="16" shape-rendering="crispEdges" style="display:block"><defs><pattern id="sff55ff" width="4" height="4" patternUnits="userSpaceOnUse"><rect width="4" height="4" fill="#000"/><rect x="0" y="0" width="2" height="2" fill="#ff55ff"/><rect x="2" y="2" width="2" height="2" fill="#ff55ff"/></pattern></defs><rect width="16" height="16" fill="url(#sff55ff)"/></svg></div><div class="t" style="left:641px;top:366px;line-height:16px">13 - Bright Magenta Wall (N/S)</div><div class="sw" style="left:623px;top:384px"><svg width="16" height="16" shape-rendering="crispEdges" style="display:block"><defs><pattern id="sffff55" width="4" height="4" patternUnits="userSpaceOnUse"><rect width="4" height="4" fill="#000"/><rect x="0" y="0" width="2" height="2" fill="#ffff55"/><rect x="2" y="2" width="2" height="2" fill="#ffff55"/></pattern></defs><rect width="16" height="16" fill="url(#sffff55)"/></svg></div><div class="t" style="left:641px;top:385px;line-height:16px">14 - Bright Yellow Wall (N/S)</div><div class="sw" style="left:623px;top:403px"><svg width="16" height="16" shape-rendering="crispEdges" style="display:block"><defs><pattern id="sffffff" width="4" height="4" patternUnits="userSpaceOnUse"><rect width="4" height="4" fill="#000"/><rect x="0" y="0" width="2" height="2" fill="#ffffff"/><rect x="2" y="2" width="2" height="2" fill="#ffffff"/></pattern></defs><rect width="16" height="16" fill="url(#sffffff)"/></svg></div><div class="t" style="left:641px;top:404px;line-height:16px">15 - White Wall (N/S)</div>

  <!-- Tools & Zoom group -->
  <div class="a" style="left:617px;top:547px;width:315px;height:41px;border:1px solid #7a7a7a"></div>
  <div class="t" style="left:624px;top:541px;padding:0 2px;background:#202020">Tools &amp; Zoom</div>
  <div class="btn" style="left:623px;top:558px;background:#595959"></div><div class="btn" style="left:658px;top:558px;background:#333333"></div><div class="btn" style="left:693px;top:558px;background:#333333"></div><div class="btn" style="left:728px;top:558px;background:#333333"></div><div class="btn" style="left:763px;top:558px;background:#333333"></div><div class="btn" style="left:833px;top:558px;background:#333"></div><div class="btn" style="left:903px;top:558px;background:#333"></div><svg class="a" style="left:627px;top:561px" width="16" height="16" shape-rendering="crispEdges"><rect x="11" y="2" width="2" height="1" fill="#000000"/><rect x="10" y="3" width="1" height="1" fill="#000000"/><rect x="11" y="3" width="2" height="1" fill="#e00000"/><rect x="13" y="3" width="1" height="1" fill="#000000"/><rect x="9" y="4" width="1" height="1" fill="#000000"/><rect x="10" y="4" width="1" height="1" fill="#fff080"/><rect x="11" y="4" width="1" height="1" fill="#000000"/><rect x="12" y="4" width="1" height="1" fill="#e00000"/><rect x="13" y="4" width="1" height="1" fill="#000000"/><rect x="8" y="5" width="1" height="1" fill="#000000"/><rect x="9" y="5" width="3" height="1" fill="#fff080"/><rect x="12" y="5" width="1" height="1" fill="#000000"/><rect x="7" y="6" width="1" height="1" fill="#000000"/><rect x="8" y="6" width="3" height="1" fill="#fff080"/><rect x="11" y="6" width="1" height="1" fill="#000000"/><rect x="6" y="7" width="1" height="1" fill="#000000"/><rect x="7" y="7" width="3" height="1" fill="#fff080"/><rect x="10" y="7" width="1" height="1" fill="#000000"/><rect x="5" y="8" width="1" height="1" fill="#000000"/><rect x="6" y="8" width="3" height="1" fill="#fff080"/><rect x="9" y="8" width="1" height="1" fill="#000000"/><rect x="4" y="9" width="1" height="1" fill="#000000"/><rect x="5" y="9" width="3" height="1" fill="#fff080"/><rect x="8" y="9" width="1" height="1" fill="#000000"/><rect x="3" y="10" width="1" height="1" fill="#000000"/><rect x="4" y="10" width="3" height="1" fill="#fff080"/><rect x="7" y="10" width="1" height="1" fill="#000000"/><rect x="2" y="11" width="1" height="1" fill="#000000"/><rect x="3" y="11" width="1" height="1" fill="#c8c8c8"/><rect x="4" y="11" width="2" height="1" fill="#fff080"/><rect x="6" y="11" width="1" height="1" fill="#000000"/><rect x="2" y="12" width="2" height="1" fill="#000000"/><rect x="4" y="12" width="1" height="1" fill="#c8c8c8"/><rect x="5" y="12" width="1" height="1" fill="#000000"/><rect x="2" y="13" width="3" height="1" fill="#000000"/></svg><svg class="a" style="left:661px;top:562px" width="16" height="16" shape-rendering="crispEdges"><rect x="1" y="3" width="3" height="1" fill="#000000"/><rect x="5" y="3" width="3" height="1" fill="#000000"/><rect x="9" y="3" width="3" height="1" fill="#000000"/><rect x="13" y="3" width="2" height="1" fill="#000000"/><rect x="1" y="4" width="1" height="1" fill="#000000"/><rect x="14" y="4" width="1" height="1" fill="#000000"/><rect x="1" y="6" width="1" height="1" fill="#000000"/><rect x="14" y="6" width="1" height="1" fill="#000000"/><rect x="1" y="7" width="1" height="1" fill="#000000"/><rect x="14" y="7" width="1" height="1" fill="#000000"/><rect x="1" y="9" width="1" height="1" fill="#000000"/><rect x="14" y="9" width="1" height="1" fill="#000000"/><rect x="1" y="10" width="2" height="1" fill="#000000"/><rect x="4" y="10" width="3" height="1" fill="#000000"/><rect x="8" y="10" width="3" height="1" fill="#000000"/><rect x="12" y="10" width="3" height="1" fill="#000000"/></svg><svg class="a" style="left:696px;top:561px" width="16" height="16" shape-rendering="crispEdges"><rect x="10" y="1" width="2" height="1" fill="#000000"/><rect x="9" y="2" width="1" height="1" fill="#000000"/><rect x="12" y="2" width="1" height="1" fill="#000000"/><rect x="9" y="3" width="1" height="1" fill="#000000"/><rect x="12" y="3" width="1" height="1" fill="#000000"/><rect x="8" y="4" width="3" height="1" fill="#000000"/><rect x="12" y="4" width="1" height="1" fill="#000000"/><rect x="5" y="5" width="2" height="1" fill="#00a0a0"/><rect x="7" y="5" width="1" height="1" fill="#000000"/><rect x="8" y="5" width="2" height="1" fill="#ffffff"/><rect x="10" y="5" width="3" height="1" fill="#000000"/><rect x="4" y="6" width="2" height="1" fill="#00a0a0"/><rect x="6" y="6" width="1" height="1" fill="#000000"/><rect x="7" y="6" width="3" height="1" fill="#ffffff"/><rect x="10" y="6" width="1" height="1" fill="#000000"/><rect x="11" y="6" width="1" height="1" fill="#ffffff"/><rect x="12" y="6" width="2" height="1" fill="#000000"/><rect x="3" y="7" width="2" height="1" fill="#00a0a0"/><rect x="5" y="7" width="1" height="1" fill="#000000"/><rect x="6" y="7" width="4" height="1" fill="#ffffff"/><rect x="10" y="7" width="1" height="1" fill="#000000"/><rect x="11" y="7" width="3" height="1" fill="#ffffff"/><rect x="14" y="7" width="1" height="1" fill="#000000"/><rect x="3" y="8" width="1" height="1" fill="#00a0a0"/><rect x="4" y="8" width="1" height="1" fill="#000000"/><rect x="5" y="8" width="4" height="1" fill="#ffffff"/><rect x="9" y="8" width="3" height="1" fill="#000000"/><rect x="12" y="8" width="3" height="1" fill="#ffffff"/><rect x="15" y="8" width="1" height="1" fill="#000000"/><rect x="3" y="9" width="1" height="1" fill="#00a0a0"/><rect x="4" y="9" width="2" height="1" fill="#000000"/><rect x="6" y="9" width="4" height="1" fill="#ffffff"/><rect x="10" y="9" width="1" height="1" fill="#000000"/><rect x="11" y="9" width="3" height="1" fill="#ffffff"/><rect x="14" y="9" width="1" height="1" fill="#000000"/><rect x="3" y="10" width="1" height="1" fill="#00a0a0"/><rect x="5" y="10" width="2" height="1" fill="#000000"/><rect x="7" y="10" width="6" height="1" fill="#ffffff"/><rect x="13" y="10" width="1" height="1" fill="#000000"/><rect x="3" y="11" width="1" height="1" fill="#00a0a0"/><rect x="6" y="11" width="2" height="1" fill="#000000"/><rect x="8" y="11" width="4" height="1" fill="#ffffff"/><rect x="12" y="11" width="1" height="1" fill="#000000"/><rect x="3" y="12" width="1" height="1" fill="#00a0a0"/><rect x="7" y="12" width="2" height="1" fill="#000000"/><rect x="9" y="12" width="2" height="1" fill="#ffffff"/><rect x="11" y="12" width="1" height="1" fill="#000000"/><rect x="8" y="13" width="3" height="1" fill="#000000"/><rect x="9" y="14" width="1" height="1" fill="#000000"/></svg><svg class="a" style="left:731px;top:561px" width="16" height="16" shape-rendering="crispEdges"><rect x="11" y="2" width="2" height="1" fill="#000000"/><rect x="10" y="3" width="4" height="1" fill="#000000"/><rect x="9" y="4" width="5" height="1" fill="#000000"/><rect x="8" y="5" width="6" height="1" fill="#000000"/><rect x="7" y="6" width="1" height="1" fill="#000000"/><rect x="8" y="6" width="1" height="1" fill="#ffffff"/><rect x="9" y="6" width="3" height="1" fill="#000000"/><rect x="6" y="7" width="1" height="1" fill="#000000"/><rect x="7" y="7" width="2" height="1" fill="#ffffff"/><rect x="9" y="7" width="2" height="1" fill="#000000"/><rect x="12" y="7" width="1" height="1" fill="#000000"/><rect x="5" y="8" width="1" height="1" fill="#000000"/><rect x="6" y="8" width="3" height="1" fill="#ffffff"/><rect x="9" y="8" width="1" height="1" fill="#000000"/><rect x="4" y="9" width="1" height="1" fill="#000000"/><rect x="5" y="9" width="3" height="1" fill="#ffffff"/><rect x="8" y="9" width="1" height="1" fill="#000000"/><rect x="3" y="10" width="1" height="1" fill="#000000"/><rect x="4" y="10" width="3" height="1" fill="#ffffff"/><rect x="7" y="10" width="1" height="1" fill="#000000"/><rect x="2" y="11" width="1" height="1" fill="#000000"/><rect x="3" y="11" width="1" height="1" fill="#c8c8c8"/><rect x="4" y="11" width="2" height="1" fill="#ffffff"/><rect x="6" y="11" width="1" height="1" fill="#000000"/><rect x="2" y="12" width="1" height="1" fill="#000000"/><rect x="3" y="12" width="2" height="1" fill="#c8c8c8"/><rect x="5" y="12" width="1" height="1" fill="#000000"/><rect x="2" y="13" width="3" height="1" fill="#000000"/></svg><svg class="a" style="left:766px;top:561px" width="16" height="16" shape-rendering="crispEdges"><rect x="1" y="4" width="14" height="1" fill="#000000"/><rect x="1" y="5" width="1" height="1" fill="#000000"/><rect x="14" y="5" width="1" height="1" fill="#000000"/><rect x="1" y="6" width="1" height="1" fill="#000000"/><rect x="14" y="6" width="1" height="1" fill="#000000"/><rect x="1" y="7" width="1" height="1" fill="#000000"/><rect x="14" y="7" width="1" height="1" fill="#000000"/><rect x="1" y="8" width="1" height="1" fill="#000000"/><rect x="14" y="8" width="1" height="1" fill="#000000"/><rect x="1" y="9" width="1" height="1" fill="#000000"/><rect x="14" y="9" width="1" height="1" fill="#000000"/><rect x="1" y="10" width="1" height="1" fill="#000000"/><rect x="14" y="10" width="1" height="1" fill="#000000"/><rect x="1" y="11" width="14" height="1" fill="#000000"/></svg><svg class="a" style="left:836px;top:561px" width="16" height="16" shape-rendering="crispEdges"><rect x="3" y="1" width="5" height="1" fill="#000000"/><rect x="2" y="2" width="2" height="1" fill="#000000"/><rect x="7" y="2" width="2" height="1" fill="#000000"/><rect x="1" y="3" width="2" height="1" fill="#000000"/><rect x="5" y="3" width="2" height="1" fill="#00a000"/><rect x="8" y="3" width="2" height="1" fill="#000000"/><rect x="1" y="4" width="1" height="1" fill="#000000"/><rect x="5" y="4" width="2" height="1" fill="#00a000"/><rect x="9" y="4" width="1" height="1" fill="#000000"/><rect x="1" y="5" width="1" height="1" fill="#000000"/><rect x="3" y="5" width="6" height="1" fill="#00a000"/><rect x="9" y="5" width="1" height="1" fill="#000000"/><rect x="1" y="6" width="1" height="1" fill="#000000"/><rect x="3" y="6" width="6" height="1" fill="#00a000"/><rect x="9" y="6" width="1" height="1" fill="#000000"/><rect x="1" y="7" width="1" height="1" fill="#000000"/><rect x="5" y="7" width="2" height="1" fill="#00a000"/><rect x="9" y="7" width="1" height="1" fill="#000000"/><rect x="1" y="8" width="2" height="1" fill="#000000"/><rect x="5" y="8" width="2" height="1" fill="#00a000"/><rect x="8" y="8" width="2" height="1" fill="#000000"/><rect x="2" y="9" width="2" height="1" fill="#000000"/><rect x="7" y="9" width="3" height="1" fill="#000000"/><rect x="3" y="10" width="5" height="1" fill="#000000"/><rect x="8" y="10" width="1" height="1" fill="#ffffff"/><rect x="9" y="10" width="1" height="1" fill="#c8c8c8"/><rect x="10" y="10" width="1" height="1" fill="#000000"/><rect x="9" y="11" width="1" height="1" fill="#000000"/><rect x="10" y="11" width="2" height="1" fill="#c8c8c8"/><rect x="12" y="11" width="1" height="1" fill="#000000"/><rect x="10" y="12" width="1" height="1" fill="#000000"/><rect x="11" y="12" width="2" height="1" fill="#c8c8c8"/><rect x="13" y="12" width="1" height="1" fill="#000000"/><rect x="11" y="13" width="1" height="1" fill="#000000"/><rect x="12" y="13" width="2" height="1" fill="#c8c8c8"/><rect x="14" y="13" width="1" height="1" fill="#000000"/><rect x="12" y="14" width="2" height="1" fill="#000000"/></svg><svg class="a" style="left:906px;top:561px" width="16" height="16" shape-rendering="crispEdges"><rect x="3" y="1" width="5" height="1" fill="#000000"/><rect x="2" y="2" width="2" height="1" fill="#000000"/><rect x="7" y="2" width="2" height="1" fill="#000000"/><rect x="1" y="3" width="2" height="1" fill="#000000"/><rect x="8" y="3" width="2" height="1" fill="#000000"/><rect x="1" y="4" width="1" height="1" fill="#000000"/><rect x="9" y="4" width="1" height="1" fill="#000000"/><rect x="1" y="5" width="1" height="1" fill="#000000"/><rect x="3" y="5" width="6" height="1" fill="#a00000"/><rect x="9" y="5" width="1" height="1" fill="#000000"/><rect x="1" y="6" width="1" height="1" fill="#000000"/><rect x="3" y="6" width="6" height="1" fill="#a00000"/><rect x="9" y="6" width="1" height="1" fill="#000000"/><rect x="1" y="7" width="1" height="1" fill="#000000"/><rect x="9" y="7" width="1" height="1" fill="#000000"/><rect x="1" y="8" width="2" height="1" fill="#000000"/><rect x="8" y="8" width="2" height="1" fill="#000000"/><rect x="2" y="9" width="2" height="1" fill="#000000"/><rect x="7" y="9" width="3" height="1" fill="#000000"/><rect x="3" y="10" width="5" height="1" fill="#000000"/><rect x="8" y="10" width="1" height="1" fill="#ffffff"/><rect x="9" y="10" width="1" height="1" fill="#c8c8c8"/><rect x="10" y="10" width="1" height="1" fill="#000000"/><rect x="9" y="11" width="1" height="1" fill="#000000"/><rect x="10" y="11" width="2" height="1" fill="#c8c8c8"/><rect x="12" y="11" width="1" height="1" fill="#000000"/><rect x="10" y="12" width="1" height="1" fill="#000000"/><rect x="11" y="12" width="2" height="1" fill="#c8c8c8"/><rect x="13" y="12" width="1" height="1" fill="#000000"/><rect x="11" y="13" width="1" height="1" fill="#000000"/><rect x="12" y="13" width="2" height="1" fill="#c8c8c8"/><rect x="14" y="13" width="1" height="1" fill="#000000"/><rect x="12" y="14" width="2" height="1" fill="#000000"/></svg>
  <div class="t" style="left:872px;top:563px">1x</div>

  <!-- Selection group -->
  <div class="a" style="left:617px;top:605px;width:315px;height:67px;border:1px solid #7a7a7a"></div>
  <div class="t" style="left:624px;top:599px;padding:0 2px;background:#202020">Selection</div>
  <div class="t" style="left:627px;top:621px">Left:</div>
  <div class="sw" style="left:656px;top:620px"><svg width="16" height="16" shape-rendering="crispEdges" style="display:block"><defs><pattern id="selb" width="4" height="4" patternUnits="userSpaceOnUse"><rect width="4" height="4" fill="#000"/><rect x="0" y="0" width="2" height="2" fill="#0000aa"/><rect x="2" y="2" width="2" height="2" fill="#0000aa"/></pattern></defs><rect width="16" height="16" fill="url(#selb)"/></svg></div>
  <div class="t" style="left:677px;top:621px">1 - Blue Wall (E/W)</div>
  <div class="t" style="left:627px;top:647px">Right:</div>
  <div class="sw" style="left:664px;top:646px;background:#000"></div>
  <div class="t" style="left:685px;top:647px">0 - Nothing</div>

  <!-- status bar -->
  <div class="a" style="left:1px;top:677px;width:936px;height:23px;background:#000"></div>
  <div class="a" style="left:2px;top:680px;width:934px;height:19px;background:#202020"></div>
  <div class="a" style="left:919px;top:682px;width:17px;height:17px;border-left:1px solid #000;border-top:1px solid #000;background:#1e1e1e"></div>
  <svg class="a" style="left:927px;top:690px" width="8" height="8" shape-rendering="crispEdges">
    <rect x="6" y="0" width="2" height="2" fill="#ddd"/>
    <rect x="3" y="3" width="2" height="2" fill="#ddd"/><rect x="6" y="3" width="2" height="2" fill="#ddd"/>
    <rect x="0" y="6" width="2" height="2" fill="#ddd"/><rect x="3" y="6" width="2" height="2" fill="#ddd"/><rect x="6" y="6" width="2" height="2" fill="#ddd"/>
  </svg>
  <div class="a" style="left:0;top:0;width:938px;height:701px;border:1px solid #3a3a3a;border-radius:8px 8px 6px 6px;pointer-events:none"></div>
</div>
</body></html>
